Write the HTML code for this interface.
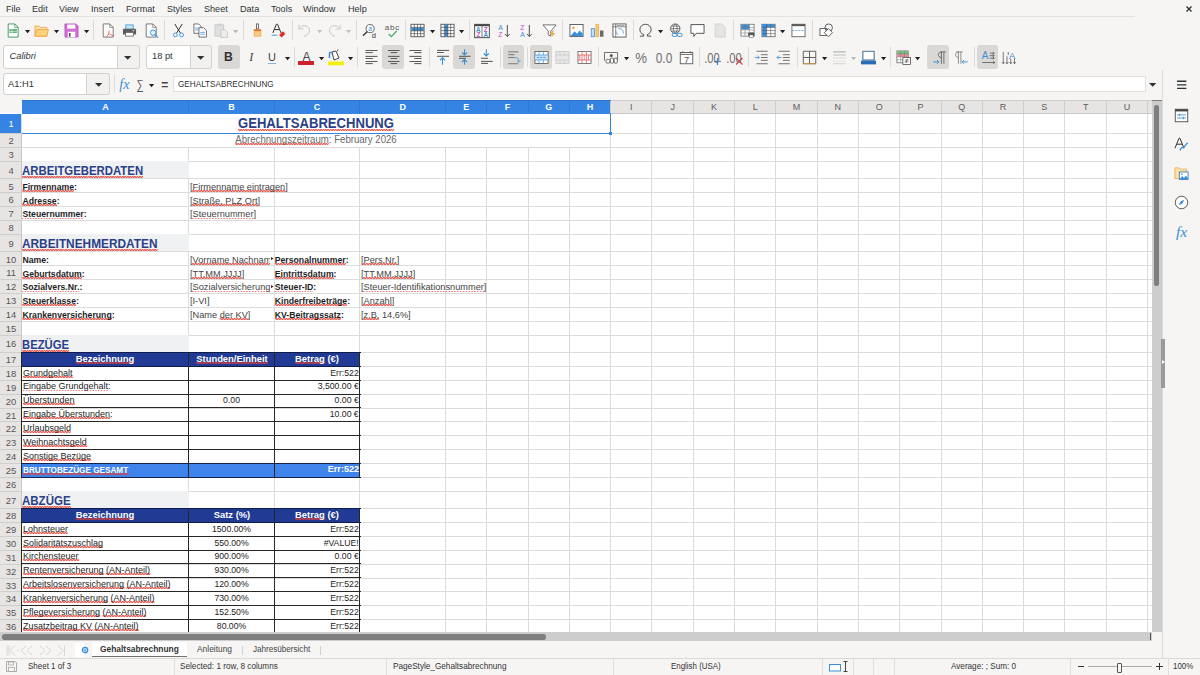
<!DOCTYPE html><html><head><meta charset="utf-8"><style>
html,body{margin:0;padding:0;}
body{width:1200px;height:675px;overflow:hidden;position:relative;background:#f6f5f4;font-family:"Liberation Sans",sans-serif;}
.a{position:absolute;}
.t{position:absolute;white-space:nowrap;line-height:1;}
.w{background:linear-gradient(45deg,transparent 36%,rgba(232,62,52,.62) 36%,rgba(232,62,52,.62) 64%,transparent 64%) 0 calc(100% + 0.4px)/2.7px 2.3px repeat-x,linear-gradient(-45deg,transparent 36%,rgba(232,62,52,.62) 36%,rgba(232,62,52,.62) 64%,transparent 64%) 1.35px calc(100% + 0.4px)/2.7px 2.3px repeat-x;}
svg{position:absolute;overflow:visible;}
</style></head><body>
<div class="a" style="left:0.00px;top:100.10px;width:1152.00px;height:531.90px;background:#ffffff;"></div><div class="a" style="left:0.00px;top:100.10px;width:22.00px;height:13.40px;background:#f6f5f4;"></div><div class="a" style="left:22.00px;top:100.10px;width:1130.00px;height:13.40px;background:#e6e5e3;"></div><div class="a" style="left:22.00px;top:100.10px;width:588.70px;height:13.40px;background:#3584e4;"></div><div class="a" style="left:0.00px;top:113.50px;width:22.00px;height:518.50px;background:#e6e5e3;"></div><div class="a" style="left:0.00px;top:113.50px;width:22.00px;height:20.25px;background:#3584e4;"></div><div class="a" style="left:21.40px;top:113.50px;width:1.00px;height:518.50px;background:#dcdcdc;"></div><div class="a" style="left:188.15px;top:113.50px;width:1.00px;height:518.50px;background:#dcdcdc;"></div><div class="a" style="left:273.73px;top:113.50px;width:1.00px;height:518.50px;background:#dcdcdc;"></div><div class="a" style="left:359.32px;top:113.50px;width:1.00px;height:518.50px;background:#dcdcdc;"></div><div class="a" style="left:444.90px;top:113.50px;width:1.00px;height:518.50px;background:#dcdcdc;"></div><div class="a" style="left:486.20px;top:113.50px;width:1.00px;height:518.50px;background:#dcdcdc;"></div><div class="a" style="left:527.50px;top:113.50px;width:1.00px;height:518.50px;background:#dcdcdc;"></div><div class="a" style="left:568.80px;top:113.50px;width:1.00px;height:518.50px;background:#dcdcdc;"></div><div class="a" style="left:610.10px;top:113.50px;width:1.00px;height:518.50px;background:#dcdcdc;"></div><div class="a" style="left:651.40px;top:113.50px;width:1.00px;height:518.50px;background:#dcdcdc;"></div><div class="a" style="left:692.70px;top:113.50px;width:1.00px;height:518.50px;background:#dcdcdc;"></div><div class="a" style="left:734.00px;top:113.50px;width:1.00px;height:518.50px;background:#dcdcdc;"></div><div class="a" style="left:775.30px;top:113.50px;width:1.00px;height:518.50px;background:#dcdcdc;"></div><div class="a" style="left:816.60px;top:113.50px;width:1.00px;height:518.50px;background:#dcdcdc;"></div><div class="a" style="left:857.90px;top:113.50px;width:1.00px;height:518.50px;background:#dcdcdc;"></div><div class="a" style="left:899.20px;top:113.50px;width:1.00px;height:518.50px;background:#dcdcdc;"></div><div class="a" style="left:940.50px;top:113.50px;width:1.00px;height:518.50px;background:#dcdcdc;"></div><div class="a" style="left:981.80px;top:113.50px;width:1.00px;height:518.50px;background:#dcdcdc;"></div><div class="a" style="left:1023.10px;top:113.50px;width:1.00px;height:518.50px;background:#dcdcdc;"></div><div class="a" style="left:1064.40px;top:113.50px;width:1.00px;height:518.50px;background:#dcdcdc;"></div><div class="a" style="left:1105.70px;top:113.50px;width:1.00px;height:518.50px;background:#dcdcdc;"></div><div class="a" style="left:1147.00px;top:113.50px;width:1.00px;height:518.50px;background:#dcdcdc;"></div><div class="a" style="left:188.15px;top:100.10px;width:1.00px;height:13.40px;background:#2f78d0;"></div><div class="a" style="left:273.73px;top:100.10px;width:1.00px;height:13.40px;background:#2f78d0;"></div><div class="a" style="left:359.32px;top:100.10px;width:1.00px;height:13.40px;background:#2f78d0;"></div><div class="a" style="left:444.90px;top:100.10px;width:1.00px;height:13.40px;background:#2f78d0;"></div><div class="a" style="left:486.20px;top:100.10px;width:1.00px;height:13.40px;background:#2f78d0;"></div><div class="a" style="left:527.50px;top:100.10px;width:1.00px;height:13.40px;background:#2f78d0;"></div><div class="a" style="left:568.80px;top:100.10px;width:1.00px;height:13.40px;background:#2f78d0;"></div><div class="a" style="left:610.10px;top:100.10px;width:1.00px;height:13.40px;background:#cfcecc;"></div><div class="a" style="left:651.40px;top:100.10px;width:1.00px;height:13.40px;background:#cfcecc;"></div><div class="a" style="left:692.70px;top:100.10px;width:1.00px;height:13.40px;background:#cfcecc;"></div><div class="a" style="left:734.00px;top:100.10px;width:1.00px;height:13.40px;background:#cfcecc;"></div><div class="a" style="left:775.30px;top:100.10px;width:1.00px;height:13.40px;background:#cfcecc;"></div><div class="a" style="left:816.60px;top:100.10px;width:1.00px;height:13.40px;background:#cfcecc;"></div><div class="a" style="left:857.90px;top:100.10px;width:1.00px;height:13.40px;background:#cfcecc;"></div><div class="a" style="left:899.20px;top:100.10px;width:1.00px;height:13.40px;background:#cfcecc;"></div><div class="a" style="left:940.50px;top:100.10px;width:1.00px;height:13.40px;background:#cfcecc;"></div><div class="a" style="left:981.80px;top:100.10px;width:1.00px;height:13.40px;background:#cfcecc;"></div><div class="a" style="left:1023.10px;top:100.10px;width:1.00px;height:13.40px;background:#cfcecc;"></div><div class="a" style="left:1064.40px;top:100.10px;width:1.00px;height:13.40px;background:#cfcecc;"></div><div class="a" style="left:1105.70px;top:100.10px;width:1.00px;height:13.40px;background:#cfcecc;"></div><div class="a" style="left:1147.00px;top:100.10px;width:1.00px;height:13.40px;background:#cfcecc;"></div><div class="a" style="left:610.70px;top:113.00px;width:541.30px;height:0.80px;background:#c9c8c6;"></div><div class="a" style="left:22.00px;top:113.00px;width:588.70px;height:0.80px;background:#3a86e0;"></div><div class="a" style="left:610.70px;top:100.10px;width:541.30px;height:0.80px;background:#cfcdcb;"></div><div class="a" style="left:22.00px;top:100.10px;width:588.70px;height:0.80px;background:#2f74c8;"></div><div class="a" style="left:21.40px;top:133.75px;width:0.80px;height:498.25px;background:#c9c8c6;"></div><div class="a" style="left:22.00px;top:133.15px;width:1130.00px;height:1.00px;background:#dcdcdc;"></div><div class="a" style="left:0.00px;top:133.15px;width:22.00px;height:1.00px;background:#cfcecc;"></div><div class="a" style="left:22.00px;top:147.00px;width:1130.00px;height:1.00px;background:#dcdcdc;"></div><div class="a" style="left:0.00px;top:147.00px;width:22.00px;height:1.00px;background:#cfcecc;"></div><div class="a" style="left:22.00px;top:160.85px;width:1130.00px;height:1.00px;background:#dcdcdc;"></div><div class="a" style="left:0.00px;top:160.85px;width:22.00px;height:1.00px;background:#cfcecc;"></div><div class="a" style="left:22.00px;top:178.45px;width:1130.00px;height:1.00px;background:#dcdcdc;"></div><div class="a" style="left:0.00px;top:178.45px;width:22.00px;height:1.00px;background:#cfcecc;"></div><div class="a" style="left:22.00px;top:192.30px;width:1130.00px;height:1.00px;background:#dcdcdc;"></div><div class="a" style="left:0.00px;top:192.30px;width:22.00px;height:1.00px;background:#cfcecc;"></div><div class="a" style="left:22.00px;top:206.15px;width:1130.00px;height:1.00px;background:#dcdcdc;"></div><div class="a" style="left:0.00px;top:206.15px;width:22.00px;height:1.00px;background:#cfcecc;"></div><div class="a" style="left:22.00px;top:220.00px;width:1130.00px;height:1.00px;background:#dcdcdc;"></div><div class="a" style="left:0.00px;top:220.00px;width:22.00px;height:1.00px;background:#cfcecc;"></div><div class="a" style="left:22.00px;top:233.85px;width:1130.00px;height:1.00px;background:#dcdcdc;"></div><div class="a" style="left:0.00px;top:233.85px;width:22.00px;height:1.00px;background:#cfcecc;"></div><div class="a" style="left:22.00px;top:251.45px;width:1130.00px;height:1.00px;background:#dcdcdc;"></div><div class="a" style="left:0.00px;top:251.45px;width:22.00px;height:1.00px;background:#cfcecc;"></div><div class="a" style="left:22.00px;top:265.30px;width:1130.00px;height:1.00px;background:#dcdcdc;"></div><div class="a" style="left:0.00px;top:265.30px;width:22.00px;height:1.00px;background:#cfcecc;"></div><div class="a" style="left:22.00px;top:279.15px;width:1130.00px;height:1.00px;background:#dcdcdc;"></div><div class="a" style="left:0.00px;top:279.15px;width:22.00px;height:1.00px;background:#cfcecc;"></div><div class="a" style="left:22.00px;top:293.00px;width:1130.00px;height:1.00px;background:#dcdcdc;"></div><div class="a" style="left:0.00px;top:293.00px;width:22.00px;height:1.00px;background:#cfcecc;"></div><div class="a" style="left:22.00px;top:306.85px;width:1130.00px;height:1.00px;background:#dcdcdc;"></div><div class="a" style="left:0.00px;top:306.85px;width:22.00px;height:1.00px;background:#cfcecc;"></div><div class="a" style="left:22.00px;top:320.70px;width:1130.00px;height:1.00px;background:#dcdcdc;"></div><div class="a" style="left:0.00px;top:320.70px;width:22.00px;height:1.00px;background:#cfcecc;"></div><div class="a" style="left:22.00px;top:334.55px;width:1130.00px;height:1.00px;background:#dcdcdc;"></div><div class="a" style="left:0.00px;top:334.55px;width:22.00px;height:1.00px;background:#cfcecc;"></div><div class="a" style="left:22.00px;top:352.15px;width:1130.00px;height:1.00px;background:#dcdcdc;"></div><div class="a" style="left:0.00px;top:352.15px;width:22.00px;height:1.00px;background:#cfcecc;"></div><div class="a" style="left:22.00px;top:366.00px;width:1130.00px;height:1.00px;background:#dcdcdc;"></div><div class="a" style="left:0.00px;top:366.00px;width:22.00px;height:1.00px;background:#cfcecc;"></div><div class="a" style="left:22.00px;top:379.85px;width:1130.00px;height:1.00px;background:#dcdcdc;"></div><div class="a" style="left:0.00px;top:379.85px;width:22.00px;height:1.00px;background:#cfcecc;"></div><div class="a" style="left:22.00px;top:393.70px;width:1130.00px;height:1.00px;background:#dcdcdc;"></div><div class="a" style="left:0.00px;top:393.70px;width:22.00px;height:1.00px;background:#cfcecc;"></div><div class="a" style="left:22.00px;top:407.55px;width:1130.00px;height:1.00px;background:#dcdcdc;"></div><div class="a" style="left:0.00px;top:407.55px;width:22.00px;height:1.00px;background:#cfcecc;"></div><div class="a" style="left:22.00px;top:421.40px;width:1130.00px;height:1.00px;background:#dcdcdc;"></div><div class="a" style="left:0.00px;top:421.40px;width:22.00px;height:1.00px;background:#cfcecc;"></div><div class="a" style="left:22.00px;top:435.25px;width:1130.00px;height:1.00px;background:#dcdcdc;"></div><div class="a" style="left:0.00px;top:435.25px;width:22.00px;height:1.00px;background:#cfcecc;"></div><div class="a" style="left:22.00px;top:449.10px;width:1130.00px;height:1.00px;background:#dcdcdc;"></div><div class="a" style="left:0.00px;top:449.10px;width:22.00px;height:1.00px;background:#cfcecc;"></div><div class="a" style="left:22.00px;top:462.95px;width:1130.00px;height:1.00px;background:#dcdcdc;"></div><div class="a" style="left:0.00px;top:462.95px;width:22.00px;height:1.00px;background:#cfcecc;"></div><div class="a" style="left:22.00px;top:476.80px;width:1130.00px;height:1.00px;background:#dcdcdc;"></div><div class="a" style="left:0.00px;top:476.80px;width:22.00px;height:1.00px;background:#cfcecc;"></div><div class="a" style="left:22.00px;top:490.65px;width:1130.00px;height:1.00px;background:#dcdcdc;"></div><div class="a" style="left:0.00px;top:490.65px;width:22.00px;height:1.00px;background:#cfcecc;"></div><div class="a" style="left:22.00px;top:508.25px;width:1130.00px;height:1.00px;background:#dcdcdc;"></div><div class="a" style="left:0.00px;top:508.25px;width:22.00px;height:1.00px;background:#cfcecc;"></div><div class="a" style="left:22.00px;top:522.10px;width:1130.00px;height:1.00px;background:#dcdcdc;"></div><div class="a" style="left:0.00px;top:522.10px;width:22.00px;height:1.00px;background:#cfcecc;"></div><div class="a" style="left:22.00px;top:535.95px;width:1130.00px;height:1.00px;background:#dcdcdc;"></div><div class="a" style="left:0.00px;top:535.95px;width:22.00px;height:1.00px;background:#cfcecc;"></div><div class="a" style="left:22.00px;top:549.80px;width:1130.00px;height:1.00px;background:#dcdcdc;"></div><div class="a" style="left:0.00px;top:549.80px;width:22.00px;height:1.00px;background:#cfcecc;"></div><div class="a" style="left:22.00px;top:563.65px;width:1130.00px;height:1.00px;background:#dcdcdc;"></div><div class="a" style="left:0.00px;top:563.65px;width:22.00px;height:1.00px;background:#cfcecc;"></div><div class="a" style="left:22.00px;top:577.50px;width:1130.00px;height:1.00px;background:#dcdcdc;"></div><div class="a" style="left:0.00px;top:577.50px;width:22.00px;height:1.00px;background:#cfcecc;"></div><div class="a" style="left:22.00px;top:591.35px;width:1130.00px;height:1.00px;background:#dcdcdc;"></div><div class="a" style="left:0.00px;top:591.35px;width:22.00px;height:1.00px;background:#cfcecc;"></div><div class="a" style="left:22.00px;top:605.20px;width:1130.00px;height:1.00px;background:#dcdcdc;"></div><div class="a" style="left:0.00px;top:605.20px;width:22.00px;height:1.00px;background:#cfcecc;"></div><div class="a" style="left:22.00px;top:619.05px;width:1130.00px;height:1.00px;background:#dcdcdc;"></div><div class="a" style="left:0.00px;top:619.05px;width:22.00px;height:1.00px;background:#cfcecc;"></div><div class="a" style="left:22.00px;top:632.90px;width:1130.00px;height:1.00px;background:#dcdcdc;"></div><div class="a" style="left:0.00px;top:632.90px;width:22.00px;height:1.00px;background:#cfcecc;"></div><div class="a" style="left:22.40px;top:113.90px;width:587.70px;height:19.25px;background:#ffffff;"></div><div class="a" style="left:22.40px;top:134.15px;width:587.70px;height:12.85px;background:#ffffff;"></div><div class="a" style="left:22.40px;top:160.85px;width:166.75px;height:17.60px;background:#f0f1f3;"></div><div class="a" style="left:22.40px;top:233.85px;width:166.75px;height:17.60px;background:#f0f1f3;"></div><div class="a" style="left:22.40px;top:334.55px;width:166.75px;height:17.60px;background:#f0f1f3;"></div><div class="a" style="left:22.40px;top:490.65px;width:166.75px;height:17.60px;background:#f0f1f3;"></div><div class="a" style="left:22.00px;top:352.15px;width:338.32px;height:14.85px;background:#213b94;"></div><div class="a" style="left:22.00px;top:462.95px;width:338.32px;height:14.85px;background:#3f84ea;"></div><div class="a" style="left:22.00px;top:352.00px;width:338.72px;height:1.00px;background:#101c4c;"></div><div class="a" style="left:22.00px;top:366.00px;width:338.72px;height:1.00px;background:#101c4c;"></div><div class="a" style="left:22.00px;top:380.00px;width:338.72px;height:1.00px;background:#262626;"></div><div class="a" style="left:22.00px;top:394.00px;width:338.72px;height:1.00px;background:#262626;"></div><div class="a" style="left:22.00px;top:407.00px;width:338.72px;height:1.00px;background:#262626;"></div><div class="a" style="left:22.00px;top:421.00px;width:338.72px;height:1.00px;background:#262626;"></div><div class="a" style="left:22.00px;top:435.00px;width:338.72px;height:1.00px;background:#262626;"></div><div class="a" style="left:22.00px;top:449.00px;width:338.72px;height:1.00px;background:#262626;"></div><div class="a" style="left:22.00px;top:463.00px;width:338.72px;height:1.00px;background:#14224f;"></div><div class="a" style="left:22.00px;top:477.00px;width:338.72px;height:1.00px;background:#14224f;"></div><div class="a" style="left:21.00px;top:352.00px;width:1.00px;height:126.00px;background:#262626;"></div><div class="a" style="left:188.00px;top:352.00px;width:1.00px;height:126.00px;background:#262626;"></div><div class="a" style="left:274.00px;top:352.00px;width:1.00px;height:126.00px;background:#262626;"></div><div class="a" style="left:359.00px;top:352.00px;width:1.00px;height:126.00px;background:#262626;"></div><div class="a" style="left:22.00px;top:508.25px;width:338.32px;height:14.85px;background:#213b94;"></div><div class="a" style="left:22.00px;top:508.00px;width:338.72px;height:1.00px;background:#101c4c;"></div><div class="a" style="left:22.00px;top:522.00px;width:338.72px;height:1.00px;background:#101c4c;"></div><div class="a" style="left:22.00px;top:536.00px;width:338.72px;height:1.00px;background:#262626;"></div><div class="a" style="left:22.00px;top:550.00px;width:338.72px;height:1.00px;background:#262626;"></div><div class="a" style="left:22.00px;top:563.00px;width:338.72px;height:1.00px;background:#262626;"></div><div class="a" style="left:22.00px;top:577.00px;width:338.72px;height:1.00px;background:#262626;"></div><div class="a" style="left:22.00px;top:591.00px;width:338.72px;height:1.00px;background:#262626;"></div><div class="a" style="left:22.00px;top:605.00px;width:338.72px;height:1.00px;background:#262626;"></div><div class="a" style="left:22.00px;top:619.00px;width:338.72px;height:1.00px;background:#262626;"></div><div class="a" style="left:22.00px;top:633.00px;width:338.72px;height:1.00px;background:#262626;"></div><div class="a" style="left:21.00px;top:508.00px;width:1.00px;height:126.00px;background:#262626;"></div><div class="a" style="left:188.00px;top:508.00px;width:1.00px;height:126.00px;background:#262626;"></div><div class="a" style="left:274.00px;top:508.00px;width:1.00px;height:126.00px;background:#262626;"></div><div class="a" style="left:359.00px;top:508.00px;width:1.00px;height:126.00px;background:#262626;"></div><div class="a" style="left:22.00px;top:132.55px;width:589.20px;height:1.90px;background:#3584e4;"></div><div class="a" style="left:609.70px;top:113.50px;width:1.60px;height:20.85px;background:#3584e4;"></div><div class="a" style="left:608.50px;top:131.95px;width:3.60px;height:3.20px;background:#3584e4;"></div><div class="a" style="left:0.00px;top:16.20px;width:1135.00px;height:0.80px;background:#e4e2df;"></div><svg style="left:1185.50px;top:5.50px;" width="6" height="6" viewBox="0 0 6 6"><path d="M0.5 0.5 L5.5 5.5 M5.5 0.5 L0.5 5.5" stroke="#2e3436" stroke-width="1.4"/></svg><svg style="left:5.50px;top:22.50px;" width="15" height="15" viewBox="0 0 24 24"><path d="M3.5 1.5 H14 L19.5 7 V22.5 H3.5Z" fill="#fff" stroke="#3f9a5e" stroke-width="1.5"/><path d="M14 1.5 V7 H19.5" fill="none" stroke="#3f9a5e" stroke-width="1.2"/><rect x="5.5" y="10" width="12" height="2.5" fill="#3f9a5e"/><rect x="5.5" y="13.5" width="12" height="2.5" fill="#62b77e"/><rect x="9" y="10" width="1" height="6" fill="#fff"/></svg><svg style="left:25.20px;top:29.80px;" width="5.2" height="3.2" viewBox="0 0 5.2 3.2"><path d="M0 0 H5.2 L2.6 3.2Z" fill="#1f1f1f"/></svg><svg style="left:34.20px;top:22.50px;" width="15" height="15" viewBox="0 0 24 24"><path d="M1.5 5 H8 L10 7 H20.5 V21 H1.5Z" fill="#fbe3a8" stroke="#f0a34a" stroke-width="1.4"/><path d="M1.5 21 L4.5 10.5 H23 L20.5 21Z" fill="#f9d27a" stroke="#f0a34a" stroke-width="1.4"/></svg><svg style="left:54.40px;top:29.80px;" width="5.2" height="3.2" viewBox="0 0 5.2 3.2"><path d="M0 0 H5.2 L2.6 3.2Z" fill="#1f1f1f"/></svg><svg style="left:63.80px;top:22.50px;" width="15" height="15" viewBox="0 0 24 24"><path d="M1.5 1.5 H19 L22.5 5 V22.5 H1.5Z" fill="#cf6fd6" stroke="#b050bb" stroke-width="1.2"/><rect x="5" y="2.5" width="13" height="6.5" fill="#fff"/><rect x="6" y="14" width="12" height="8.5" fill="#fff"/><rect x="8" y="16" width="2.5" height="6" fill="#7a3c82"/></svg><svg style="left:83.60px;top:29.80px;" width="5.2" height="3.2" viewBox="0 0 5.2 3.2"><path d="M0 0 H5.2 L2.6 3.2Z" fill="#1f1f1f"/></svg><div class="a" style="left:92.80px;top:20.00px;width:1.00px;height:20.00px;background:#dcdad7;"></div><svg style="left:100.50px;top:22.50px;" width="15" height="15" viewBox="0 0 24 24"><path d="M3.5 1.5 H14 L19.5 7 V22.5 H3.5Z" fill="#fff" stroke="#6a6a6a" stroke-width="1.4"/><path d="M14 1.5 V7 H19.5" fill="none" stroke="#6a6a6a" stroke-width="1.1"/><path d="M13 12 C13 18 10 21 8 23 M13 17 C15 19 18 20 21 20" fill="none" stroke="#e84a43" stroke-width="1.3"/></svg><svg style="left:121.60px;top:22.50px;" width="15" height="15" viewBox="0 0 24 24"><rect x="6" y="3" width="12" height="7" fill="#bfe3f8" stroke="#4a9ccc" stroke-width="1.3"/><rect x="1.5" y="9" width="21" height="9.5" rx="1.5" fill="#5d5d5d"/><rect x="5.5" y="15" width="13" height="6" fill="#fff" stroke="#5d5d5d" stroke-width="1.2"/><rect x="17" y="11.5" width="2.5" height="1.5" fill="#fff"/></svg><svg style="left:144.20px;top:22.50px;" width="15" height="15" viewBox="0 0 24 24"><path d="M3.5 1.5 H14 L19.5 7 V22.5 H3.5Z" fill="#fff" stroke="#6a6a6a" stroke-width="1.4"/><path d="M14 1.5 V7 H19.5" fill="none" stroke="#6a6a6a" stroke-width="1.1"/><circle cx="14.5" cy="15.5" r="4.3" fill="#e6f3fb" stroke="#3a8fd8" stroke-width="1.5"/><path d="M17.5 18.5 L22.5 23.5" stroke="#3a8fd8" stroke-width="1.8"/></svg><div class="a" style="left:163.80px;top:20.00px;width:1.00px;height:20.00px;background:#dcdad7;"></div><svg style="left:170.50px;top:22.50px;" width="15" height="15" viewBox="0 0 24 24"><path d="M6 1.5 L15 16 M18 1.5 L9 16" stroke="#333" stroke-width="1.6"/><circle cx="7" cy="19" r="3" fill="#fff" stroke="#3a8fd8" stroke-width="1.5"/><circle cx="17" cy="19" r="3" fill="#fff" stroke="#3a8fd8" stroke-width="1.5"/></svg><svg style="left:192.50px;top:22.50px;" width="15" height="15" viewBox="0 0 24 24"><path d="M1.5 1.5 H9 L12.5 5 V16.5 H1.5Z" fill="#fff" stroke="#555" stroke-width="1.3"/><path d="M9.5 7.5 H17 L21.5 12 V22.5 H9.5Z" fill="#fff" stroke="#555" stroke-width="1.3"/><path d="M3.5 8 H9 M3.5 11 H9 M11.5 15 H19 M11.5 18 H19" stroke="#3a8fd8" stroke-width="1.2"/></svg><svg style="left:214.30px;top:22.50px;" width="15" height="15" viewBox="0 0 24 24"><rect x="1.5" y="3" width="14" height="18" fill="#e0e0e0" stroke="#c4c4c4" stroke-width="1.3"/><rect x="5" y="1" width="7" height="4" fill="#d0d0d0"/><path d="M11 11 H18 L21.5 14.5 V23 H11Z" fill="#ececec" stroke="#c4c4c4" stroke-width="1.3"/></svg><svg style="left:233.10px;top:29.80px;" width="5.2" height="3.2" viewBox="0 0 5.2 3.2"><path d="M0 0 H5.2 L2.6 3.2Z" fill="#b8b8b8"/></svg><div class="a" style="left:242.50px;top:20.00px;width:1.00px;height:20.00px;background:#dcdad7;"></div><svg style="left:250.30px;top:22.50px;" width="15" height="15" viewBox="0 0 24 24"><rect x="10.5" y="1.5" width="3" height="8" fill="#fff" stroke="#555" stroke-width="1.3"/><path d="M6 10 H18 V13 H6Z" fill="#e07030"/><path d="M6 13 H18 V22 H6Z" fill="#f5b860"/><path d="M8 16 H16 M8 19 H16" stroke="#fff" stroke-width="0.8"/></svg><svg style="left:271.40px;top:22.50px;" width="15" height="15" viewBox="0 0 24 24"><path d="M3 16 L8.5 2 H10.5 L16 16 M5.5 10.5 H13.5" fill="none" stroke="#333" stroke-width="1.6"/><path d="M1 19.5 H10" stroke="#3a8fd8" stroke-width="1.5"/><path d="M13 19 L19 13 L23 17 L17 23Z" fill="#e02b2b"/></svg><div class="a" style="left:291.80px;top:20.00px;width:1.00px;height:20.00px;background:#dcdad7;"></div><svg style="left:297.20px;top:22.50px;" width="15" height="15" viewBox="0 0 24 24"><path d="M5 7 C10 2 20 4 20 12 C20 17 15 21 11 21" fill="none" stroke="#c8c8c8" stroke-width="1.6"/><path d="M3 2.5 V9.5 H10" fill="none" stroke="#c8c8c8" stroke-width="1.6"/></svg><svg style="left:316.80px;top:29.80px;" width="5.2" height="3.2" viewBox="0 0 5.2 3.2"><path d="M0 0 H5.2 L2.6 3.2Z" fill="#c0c0c0"/></svg><svg style="left:326.80px;top:22.50px;" width="15" height="15" viewBox="0 0 24 24"><path d="M19 7 C14 2 4 4 4 12 C4 17 9 21 13 21" fill="none" stroke="#c8c8c8" stroke-width="1.6"/><path d="M21 2.5 V9.5 H14" fill="none" stroke="#c8c8c8" stroke-width="1.6"/></svg><svg style="left:346.10px;top:29.80px;" width="5.2" height="3.2" viewBox="0 0 5.2 3.2"><path d="M0 0 H5.2 L2.6 3.2Z" fill="#c0c0c0"/></svg><div class="a" style="left:356.10px;top:20.00px;width:1.00px;height:20.00px;background:#dcdad7;"></div><svg style="left:362.30px;top:22.50px;" width="15" height="15" viewBox="0 0 24 24"><circle cx="13" cy="9" r="6.5" fill="#fff" stroke="#555" stroke-width="1.4"/><text x="13" y="12.5" font-size="11" text-anchor="middle" fill="#3a8fd8" font-family="Liberation Sans">a</text><path d="M8.5 13.5 L1.5 20.5" stroke="#333" stroke-width="2"/><text x="19" y="23.5" font-size="12" text-anchor="middle" fill="#333" font-family="Liberation Sans">d</text></svg><svg style="left:383.50px;top:22.50px;" width="16" height="16" viewBox="0 0 24 24"><text x="12" y="10.5" font-size="12" text-anchor="middle" fill="#555" font-family="Liberation Sans" textLength="22">abc</text><path d="M7 16.5 L11 20.5 L19 12" fill="none" stroke="#3fae6a" stroke-width="1.8"/></svg><div class="a" style="left:404.90px;top:20.00px;width:1.00px;height:20.00px;background:#dcdad7;"></div><svg style="left:410.20px;top:22.50px;" width="15" height="15" viewBox="0 0 24 24"><rect x="1.5" y="2" width="21" height="20" fill="#fff" stroke="#444" stroke-width="1.3"/><rect x="2" y="7.5" width="20" height="5" fill="#3a8fd8"/><path d="M1.5 7 H22.5 M1.5 12.5 H22.5 M1.5 17 H22.5 M7 2 V22 M12 2 V22 M17 2 V22" stroke="#444" stroke-width="1"/></svg><svg style="left:429.70px;top:29.80px;" width="5.2" height="3.2" viewBox="0 0 5.2 3.2"><path d="M0 0 H5.2 L2.6 3.2Z" fill="#1f1f1f"/></svg><svg style="left:439.50px;top:22.50px;" width="15" height="15" viewBox="0 0 24 24"><rect x="1.5" y="2" width="21" height="20" fill="#fff" stroke="#444" stroke-width="1.3"/><rect x="7.5" y="2" width="5" height="20" fill="#3a8fd8"/><path d="M1.5 7 H22.5 M1.5 12 H22.5 M1.5 17 H22.5 M7 2 V22 M12.5 2 V22 M17 2 V22" stroke="#444" stroke-width="1"/></svg><svg style="left:459.10px;top:29.80px;" width="5.2" height="3.2" viewBox="0 0 5.2 3.2"><path d="M0 0 H5.2 L2.6 3.2Z" fill="#1f1f1f"/></svg><div class="a" style="left:468.50px;top:20.00px;width:1.00px;height:20.00px;background:#dcdad7;"></div><svg style="left:474.20px;top:22.50px;" width="16" height="16" viewBox="0 0 24 24"><rect x="1" y="2" width="22" height="20" fill="#fff" stroke="#444" stroke-width="1.4"/><rect x="1" y="2" width="22" height="2.8" fill="#444"/><path d="M12 4 V22" stroke="#444" stroke-width="1.1"/><g font-family="Liberation Sans" font-size="9.5" text-anchor="middle" font-weight="bold"><text x="6.5" y="12.8" fill="#3a8fd8">A</text><text x="6.5" y="21" fill="#c050c0">Z</text><text x="17.5" y="12.8" fill="#c050c0">Z</text><text x="17.5" y="21" fill="#3a8fd8">A</text></g></svg><svg style="left:497.20px;top:22.50px;" width="15" height="15" viewBox="0 0 24 24"><g font-family="Liberation Sans" font-size="11" text-anchor="middle"><text x="5.5" y="10.5" fill="#3a8fd8">A</text><text x="5.5" y="22" fill="#c050c0">Z</text></g><path d="M16.5 3 V21.5 M12.5 17.5 L16.5 21.5 L20.5 17.5" fill="none" stroke="#444" stroke-width="1.5"/></svg><svg style="left:519.30px;top:22.50px;" width="15" height="15" viewBox="0 0 24 24"><g font-family="Liberation Sans" font-size="11" text-anchor="middle"><text x="5.5" y="10.5" fill="#c050c0">Z</text><text x="5.5" y="22" fill="#3a8fd8">A</text></g><path d="M16.5 3 V21.5 M12.5 17.5 L16.5 21.5 L20.5 17.5" fill="none" stroke="#444" stroke-width="1.5"/></svg><svg style="left:541.50px;top:22.50px;" width="15" height="15" viewBox="0 0 24 24"><path d="M1.5 3 H22.5 L14 13 V21 L10 19 V13Z" fill="#fff" stroke="#555" stroke-width="1.3"/><path d="M17 12 L13 18 H17 L15 23 L21 16 H17 L19 12Z" fill="#f0a030"/></svg><div class="a" style="left:561.80px;top:20.00px;width:1.00px;height:20.00px;background:#dcdad7;"></div><svg style="left:568.50px;top:22.50px;" width="15" height="15" viewBox="0 0 24 24"><rect x="1.5" y="2.5" width="21" height="19" fill="#fff" stroke="#444" stroke-width="1.3"/><circle cx="7" cy="8" r="2" fill="#f0a030"/><path d="M2 21 L9 13 L13 17 L17 12 L22 17 V21Z" fill="#3a8fd8"/></svg><svg style="left:590.40px;top:22.50px;" width="15" height="15" viewBox="0 0 24 24"><rect x="2" y="9" width="5" height="13" fill="#bfe0f8" stroke="#3a8fd8" stroke-width="1.2"/><rect x="9.5" y="2" width="4" height="20" fill="#f7c870" stroke="#f0a030" stroke-width="1"/><rect x="16" y="12" width="5.5" height="10" fill="#6a6a6a"/></svg><svg style="left:612.40px;top:22.50px;" width="15" height="15" viewBox="0 0 24 24"><rect x="1.5" y="1.5" width="21" height="21" fill="#fff" stroke="#444" stroke-width="1.3"/><path d="M1.5 6 H22.5 M6 1.5 V22.5" stroke="#444" stroke-width="1"/><path d="M10 9 C16 9 18 11 18 17 M10 18 C8 18 6 16 6 13" fill="none" stroke="#3a8fd8" stroke-width="1.3"/><rect x="8" y="3" width="12" height="2" fill="#aaa"/></svg><div class="a" style="left:633.20px;top:20.00px;width:1.00px;height:20.00px;background:#dcdad7;"></div><svg style="left:638.20px;top:22.50px;" width="15" height="15" viewBox="0 0 24 24"><path d="M3 21 H9 V18.5 C5 17 3 14 3 10.5 C3 5.5 7 2 12 2 C17 2 21 5.5 21 10.5 C21 14 19 17 15 18.5 V21 H21" fill="none" stroke="#444" stroke-width="1.5"/></svg><svg style="left:657.70px;top:29.80px;" width="5.2" height="3.2" viewBox="0 0 5.2 3.2"><path d="M0 0 H5.2 L2.6 3.2Z" fill="#1f1f1f"/></svg><svg style="left:668.70px;top:22.50px;" width="15" height="15" viewBox="0 0 24 24"><circle cx="10" cy="9" r="7.5" fill="#fff" stroke="#444" stroke-width="1.3"/><path d="M2.5 9 H17.5 M10 1.5 C6 5 6 13 10 16.5 C14 13 14 5 10 1.5 M4 5 H16 M4 13 H16" fill="none" stroke="#444" stroke-width="1"/><rect x="5" y="16.5" width="8" height="5" rx="2.5" fill="none" stroke="#3a8fd8" stroke-width="1.6"/><rect x="13" y="16.5" width="8" height="5" rx="2.5" fill="none" stroke="#3a8fd8" stroke-width="1.6"/></svg><svg style="left:690.30px;top:22.50px;" width="15" height="15" viewBox="0 0 24 24"><path d="M1.5 2.5 H22.5 V16.5 H10 L6 21.5 V16.5 H1.5Z" fill="#fff" stroke="#444" stroke-width="1.4"/></svg><svg style="left:713.00px;top:22.50px;" width="15" height="15" viewBox="0 0 24 24"><path d="M3.5 1.5 H14 L19.5 7 V22.5 H3.5Z" fill="#e4e4e4" stroke="#d0d0d0" stroke-width="1.3"/></svg><div class="a" style="left:733.20px;top:20.00px;width:1.00px;height:20.00px;background:#dcdad7;"></div><svg style="left:739.60px;top:22.50px;" width="15" height="15" viewBox="0 0 24 24"><rect x="1.5" y="2" width="21" height="19" fill="#fff" stroke="#666" stroke-width="1.2"/><rect x="2" y="2.5" width="13" height="8" fill="#3a8fd8"/><path d="M1.5 7 H22.5 M1.5 11 H22.5 M1.5 16 H22.5 M8 2 V21 M15 2 V21" stroke="#777" stroke-width="0.9"/><rect x="13" y="15" width="10" height="6" rx="1.5" fill="#555"/><rect x="15" y="19" width="6" height="4" fill="#fff" stroke="#555" stroke-width="0.8"/></svg><svg style="left:760.50px;top:22.50px;" width="15" height="15" viewBox="0 0 24 24"><rect x="1.5" y="2" width="21" height="20" fill="#fff" stroke="#555" stroke-width="1.2"/><rect x="2" y="2" width="7" height="20" fill="#3a8fd8"/><rect x="2" y="2" width="20.5" height="5" fill="#3a8fd8"/><path d="M1.5 7 H22.5 M1.5 12 H22.5 M1.5 17 H22.5 M9 2 V22 M15.5 2 V22" stroke="#555" stroke-width="0.9"/></svg><svg style="left:780.40px;top:29.80px;" width="5.2" height="3.2" viewBox="0 0 5.2 3.2"><path d="M0 0 H5.2 L2.6 3.2Z" fill="#1f1f1f"/></svg><svg style="left:791.20px;top:22.50px;" width="15" height="15" viewBox="0 0 24 24"><rect x="1.5" y="2" width="21" height="20" fill="#fff" stroke="#555" stroke-width="1.3"/><rect x="1.5" y="2" width="21" height="3" fill="#555"/><path d="M2 12 H22" stroke="#3a8fd8" stroke-width="1.2" stroke-dasharray="3 2"/></svg><div class="a" style="left:811.80px;top:20.00px;width:1.00px;height:20.00px;background:#dcdad7;"></div><svg style="left:818.60px;top:22.50px;" width="15" height="15" viewBox="0 0 24 24"><rect x="1.5" y="9" width="11" height="11" fill="#fff" stroke="#444" stroke-width="1.3"/><circle cx="15.5" cy="7.5" r="6" fill="none" stroke="#444" stroke-width="1.3"/><path d="M15 9 L21.5 15.5 L15 22 L8.5 15.5Z" fill="#fff" stroke="#444" stroke-width="1.3"/></svg><div class="a" style="left:3.00px;top:45.20px;width:134.50px;height:21.60px;background:#ffffff;border:1px solid #d3d1ce;border-radius:3px;"></div><div class="a" style="left:116.5px;top:45.2px;width:21px;height:21.6px;background:#f2f1ef;border:1px solid #d3d1ce;border-radius:0 3px 3px 0;"></div><svg style="left:124.30px;top:55.50px;" width="7.4" height="3.8" viewBox="0 0 7.4 3.8"><path d="M0 0 H7.4 L3.7 3.8Z" fill="#2e3436"/></svg><div class="a" style="left:145.80px;top:45.20px;width:64.50px;height:21.60px;background:#ffffff;border:1px solid #d3d1ce;border-radius:3px;"></div><div class="a" style="left:189.5px;top:45.2px;width:20.8px;height:21.6px;background:#f2f1ef;border:1px solid #d3d1ce;border-radius:0 3px 3px 0;"></div><svg style="left:196.80px;top:55.50px;" width="7.4" height="3.8" viewBox="0 0 7.4 3.8"><path d="M0 0 H7.4 L3.7 3.8Z" fill="#2e3436"/></svg><div class="a" style="left:218.40px;top:45.30px;width:21.30px;height:24.00px;background:#dad8d4;border-radius:3px;"></div><div class="a" style="left:268.00px;top:63.20px;width:8.30px;height:1.20px;background:#7fb5e3;"></div><svg style="left:284.70px;top:56.70px;" width="5.2" height="3.2" viewBox="0 0 5.2 3.2"><path d="M0 0 H5.2 L2.6 3.2Z" fill="#1f1f1f"/></svg><div class="a" style="left:294.20px;top:47.00px;width:1.00px;height:20.00px;background:#dcdad7;"></div><div class="a" style="left:298.40px;top:61.40px;width:16.00px;height:3.60px;background:#d0202a;"></div><svg style="left:318.70px;top:56.70px;" width="5.2" height="3.2" viewBox="0 0 5.2 3.2"><path d="M0 0 H5.2 L2.6 3.2Z" fill="#1f1f1f"/></svg><svg style="left:328.00px;top:48.50px;" width="16" height="17" viewBox="0 0 16 17"><path d="M4 3 L8 2 L11 9 L6 11Z" fill="#fff" stroke="#444" stroke-width="1"/><path d="M9 1.5 L10.5 1" stroke="#444" stroke-width="1"/><path d="M1.5 3.5 V9 M1.5 3.5 H4" stroke="#3a8fd8" stroke-width="1.5" fill="none"/><rect x="0" y="12.5" width="16" height="3.8" fill="#f5ee10"/></svg><svg style="left:348.10px;top:56.70px;" width="5.2" height="3.2" viewBox="0 0 5.2 3.2"><path d="M0 0 H5.2 L2.6 3.2Z" fill="#1f1f1f"/></svg><div class="a" style="left:357.20px;top:47.00px;width:1.00px;height:20.00px;background:#dcdad7;"></div><svg style="left:0.00px;top:0.00px;" width="1200" height="100" viewBox="0 0 1200 100"><path d="M365.5 50.5 H377.5" stroke="#5a5a5a" stroke-width="1.05"/><path d="M365.5 52.6 H372.8" stroke="#5a5a5a" stroke-width="1.05"/><path d="M365.5 56.4 H377.5" stroke="#5a5a5a" stroke-width="1.05"/><path d="M365.5 58.5 H372.8" stroke="#5a5a5a" stroke-width="1.05"/><path d="M365.5 61.5 H377.5" stroke="#5a5a5a" stroke-width="1.05"/><path d="M365.5 63.6 H372.8" stroke="#5a5a5a" stroke-width="1.05"/></svg><div class="a" style="left:382.30px;top:45.30px;width:21.70px;height:24.00px;background:#dad8d4;border-radius:3px;"></div><svg style="left:0.00px;top:0.00px;" width="1200" height="100" viewBox="0 0 1200 100"><path d="M388 50.5 H399.6" stroke="#5a5a5a" stroke-width="1.05"/><path d="M390.6 52.6 H397.2" stroke="#5a5a5a" stroke-width="1.05"/><path d="M388 56.4 H399.6" stroke="#5a5a5a" stroke-width="1.05"/><path d="M390.6 58.5 H397.2" stroke="#5a5a5a" stroke-width="1.05"/><path d="M388 61.5 H399.6" stroke="#5a5a5a" stroke-width="1.05"/><path d="M390.6 63.6 H397.2" stroke="#5a5a5a" stroke-width="1.05"/></svg><svg style="left:0.00px;top:0.00px;" width="1200" height="100" viewBox="0 0 1200 100"><path d="M409.4 50.5 H421.5" stroke="#5a5a5a" stroke-width="1.05"/><path d="M414.2 52.6 H421.5" stroke="#5a5a5a" stroke-width="1.05"/><path d="M409.4 56.4 H421.5" stroke="#5a5a5a" stroke-width="1.05"/><path d="M414.2 58.5 H421.5" stroke="#5a5a5a" stroke-width="1.05"/><path d="M409.4 61.5 H421.5" stroke="#5a5a5a" stroke-width="1.05"/><path d="M414.2 63.6 H421.5" stroke="#5a5a5a" stroke-width="1.05"/></svg><div class="a" style="left:428.50px;top:47.00px;width:1.00px;height:20.00px;background:#dcdad7;"></div><svg style="left:0.00px;top:0.00px;" width="1200" height="100" viewBox="0 0 1200 100"><path d="M437 50.4 H449" stroke="#5a5a5a" stroke-width="1.05"/><path d="M437 52.5 H443.8" stroke="#5a5a5a" stroke-width="1.05"/><path d="M437 56.3 H449" stroke="#5a5a5a" stroke-width="1.05"/><path d="M442.5 64.8 V57.8 M440 60.3 L442.5 57.6 L445 60.3" stroke="#3a8fd8" stroke-width="1.1" fill="none"/></svg><div class="a" style="left:453.40px;top:45.30px;width:21.60px;height:24.00px;background:#dad8d4;border-radius:3px;"></div><svg style="left:0.00px;top:0.00px;" width="1200" height="100" viewBox="0 0 1200 100"><path d="M459 56.3 H470.5" stroke="#5a5a5a" stroke-width="1.05"/><path d="M459 58.3 H466" stroke="#5a5a5a" stroke-width="1.05"/><path d="M464.5 49.3 V55 M462 52.5 L464.5 55 L467 52.5 M464.5 64.8 V59.5 M462 62 L464.5 59.5 L467 62" stroke="#3a8fd8" stroke-width="1.1" fill="none"/></svg><svg style="left:0.00px;top:0.00px;" width="1200" height="100" viewBox="0 0 1200 100"><path d="M481 58.3 H488" stroke="#5a5a5a" stroke-width="1.05"/><path d="M481 61.4 H492.7" stroke="#5a5a5a" stroke-width="1.05"/><path d="M481 63.4 H488" stroke="#5a5a5a" stroke-width="1.05"/><path d="M486.3 49.3 V56 M483.8 53.5 L486.3 56 L488.8 53.5" stroke="#3a8fd8" stroke-width="1.1" fill="none"/></svg><div class="a" style="left:500.10px;top:47.00px;width:1.00px;height:20.00px;background:#dcdad7;"></div><div class="a" style="left:503.00px;top:45.30px;width:21.30px;height:24.00px;background:#dad8d4;border-radius:3px;"></div><svg style="left:506.50px;top:49.50px;" width="15" height="15" viewBox="0 0 24 24"><path d="M2 3 H18 M2 7.5 H12 M2 12 H12 M2 22 H18" stroke="#555" stroke-width="1.2"/><path d="M12 12 C17 12 19 14 19 18 M16 17 L19 19.5 L22 17" stroke="#3a8fd8" stroke-width="1.3" fill="none"/></svg><div class="a" style="left:527.20px;top:47.00px;width:1.00px;height:20.00px;background:#dcdad7;"></div><div class="a" style="left:530.30px;top:45.30px;width:21.40px;height:24.00px;background:#dad8d4;border-radius:3px;"></div><svg style="left:533.50px;top:49.50px;" width="15" height="15" viewBox="0 0 24 24"><rect x="1.5" y="2.5" width="21" height="19" fill="#fff" stroke="#444" stroke-width="1.2"/><rect x="2" y="8" width="20" height="8" fill="#bfe0f8"/><path d="M1.5 8 H22.5 M1.5 16 H22.5 M8 2.5 V8 M15 2.5 V8 M8 16 V21.5 M15 16 V21.5" stroke="#3a8fd8" stroke-width="1.1"/><path d="M5 12 H19" stroke="#3a8fd8" stroke-width="1.3" stroke-dasharray="3 2"/></svg><svg style="left:555.30px;top:49.50px;" width="15" height="15" viewBox="0 0 24 24"><rect x="1.5" y="2.5" width="21" height="19" fill="#e8e8e8" stroke="#c6c6c6" stroke-width="1.2"/><path d="M1.5 8 H22.5 M1.5 16 H22.5 M8 2.5 V8 M15 2.5 V8 M8 16 V21.5 M15 16 V21.5" stroke="#c6c6c6" stroke-width="1.1"/></svg><svg style="left:577.30px;top:49.50px;" width="15" height="15" viewBox="0 0 24 24"><rect x="1.5" y="2.5" width="21" height="19" fill="#fff" stroke="#555" stroke-width="1.2"/><path d="M1.5 8 H22.5 M1.5 16 H22.5 M8 2.5 V21.5 M15 2.5 V21.5 M4.5 8 V16 M11.5 8 V16 M18.5 8 V16" stroke="#e04848" stroke-width="1.1"/></svg><div class="a" style="left:597.80px;top:47.00px;width:1.00px;height:20.00px;background:#dcdad7;"></div><svg style="left:602.50px;top:49.50px;" width="16" height="15" viewBox="0 0 24 24"><path d="M1.5 4 H22.5 V17 M1.5 4 V17" fill="none" stroke="#555" stroke-width="1.3" stroke-dasharray="20 0"/><circle cx="12.5" cy="9" r="2.2" fill="#444"/><rect x="4" y="15" width="6" height="6" rx="2" fill="#fff" stroke="#444" stroke-width="1.2"/><rect x="11" y="13" width="5" height="8" rx="1.5" fill="#fff" stroke="#444" stroke-width="1.2"/><rect x="17" y="13" width="5" height="8" rx="1.5" fill="#fff" stroke="#444" stroke-width="1.2"/></svg><svg style="left:623.70px;top:56.70px;" width="5.2" height="3.2" viewBox="0 0 5.2 3.2"><path d="M0 0 H5.2 L2.6 3.2Z" fill="#1f1f1f"/></svg><svg style="left:678.50px;top:49.50px;" width="15" height="15" viewBox="0 0 24 24"><rect x="2" y="4" width="20" height="18" fill="#fff" stroke="#555" stroke-width="1.4"/><path d="M2 7 H22 M6 2 V5 M18 2 V5" stroke="#555" stroke-width="1.4"/><text x="12" y="20.5" font-size="15" text-anchor="middle" fill="#555" font-family="Liberation Sans">7</text></svg><div class="a" style="left:698.80px;top:47.00px;width:1.00px;height:20.00px;background:#dcdad7;"></div><svg style="left:714.00px;top:58.00px;" width="7" height="7" viewBox="0 0 7 7"><path d="M3.5 0 V7 M0 3.5 H7" stroke="#3a8fd8" stroke-width="1.2"/></svg><svg style="left:736.00px;top:58.00px;" width="6.5" height="6.5" viewBox="0 0 6.5 6.5"><path d="M0 0 L6.5 6.5 M6.5 0 L0 6.5" stroke="#e03a3a" stroke-width="1.1"/></svg><div class="a" style="left:748.20px;top:47.00px;width:1.00px;height:20.00px;background:#dcdad7;"></div><svg style="left:754.20px;top:49.50px;" width="15" height="15" viewBox="0 0 24 24"><path d="M4 2 H22 M11 7.5 H22 M11 12 H22 M11 16.5 H22 M4 22 H22" stroke="#555" stroke-width="1.3"/><path d="M1 12 H8 M5.5 9 L8.5 12 L5.5 15" stroke="#3a8fd8" stroke-width="1.3" fill="none"/></svg><svg style="left:775.60px;top:49.50px;" width="15" height="15" viewBox="0 0 24 24"><path d="M4 2 H22 M11 7.5 H22 M11 12 H22 M11 16.5 H22 M4 22 H22" stroke="#555" stroke-width="1.3"/><path d="M9 12 H1.5 M4.5 9 L1.5 12 L4.5 15" stroke="#3a8fd8" stroke-width="1.3" fill="none"/></svg><div class="a" style="left:796.80px;top:47.00px;width:1.00px;height:20.00px;background:#dcdad7;"></div><svg style="left:802.20px;top:49.50px;" width="15" height="15" viewBox="0 0 24 24"><path d="M2 2 H22 V22 H2Z M12 2 V22 M2 12 H22" fill="none" stroke="#444" stroke-width="1.3"/><path d="M2 22 H22" stroke="#f0a030" stroke-width="1.2"/></svg><svg style="left:822.40px;top:56.70px;" width="5.2" height="3.2" viewBox="0 0 5.2 3.2"><path d="M0 0 H5.2 L2.6 3.2Z" fill="#1f1f1f"/></svg><svg style="left:832.20px;top:49.50px;" width="15" height="15" viewBox="0 0 24 24"><path d="M2 3 H22" stroke="#bbb" stroke-width="2.2"/><path d="M2 8 H22" stroke="#bbb" stroke-width="1.6"/><path d="M2 13 H22" stroke="#bbb" stroke-width="1.2" stroke-dasharray="3 1.5"/><path d="M2 18 H22" stroke="#bbb" stroke-width="1" stroke-dasharray="1.5 1.5"/><path d="M2 22 H22" stroke="#bbb" stroke-width="1"/></svg><svg style="left:851.40px;top:56.70px;" width="5.2" height="3.2" viewBox="0 0 5.2 3.2"><path d="M0 0 H5.2 L2.6 3.2Z" fill="#b8b8b8"/></svg><svg style="left:859.50px;top:49.50px;" width="17" height="15" viewBox="0 0 24 24"><rect x="3" y="2" width="18" height="14" fill="#fff" stroke="#555" stroke-width="1.3"/><rect x="3" y="2" width="18" height="14" fill="none" stroke="#3a8fd8" stroke-width="0.8"/><rect x="0" y="17" width="24" height="6" fill="#2a6db5"/></svg><svg style="left:880.70px;top:56.70px;" width="5.2" height="3.2" viewBox="0 0 5.2 3.2"><path d="M0 0 H5.2 L2.6 3.2Z" fill="#1f1f1f"/></svg><div class="a" style="left:890.20px;top:47.00px;width:1.00px;height:20.00px;background:#dcdad7;"></div><svg style="left:895.50px;top:49.50px;" width="15" height="15" viewBox="0 0 24 24"><rect x="1.5" y="1.5" width="18" height="19" fill="#fff" stroke="#555" stroke-width="1.1"/><rect x="2" y="2" width="17.5" height="4.5" fill="#6cc07a"/><rect x="2" y="6.5" width="17.5" height="4.5" fill="#f08a9a"/><path d="M1.5 6.5 H19.5 M1.5 11 H19.5 M1.5 15.5 H19.5 M7.5 1.5 V20.5 M13.5 1.5 V20.5" stroke="#777" stroke-width="0.8"/><rect x="11" y="12" width="12" height="11" fill="#fff" stroke="#444" stroke-width="1.2"/><path d="M14 16 H20 M14 19 H20 M18.5 14 L15.5 21" stroke="#444" stroke-width="1"/></svg><svg style="left:915.40px;top:56.70px;" width="5.2" height="3.2" viewBox="0 0 5.2 3.2"><path d="M0 0 H5.2 L2.6 3.2Z" fill="#1f1f1f"/></svg><div class="a" style="left:927.20px;top:45.30px;width:22.00px;height:24.00px;background:#dad8d4;border-radius:3px;"></div><svg style="left:931.50px;top:49.50px;" width="15" height="15" viewBox="0 0 24 24"><path d="M14 3 H22 M15 3 V22 M19 3 V22" stroke="#555" stroke-width="1.3" fill="none"/><path d="M15 3 C9 3 8 12 15 12" fill="none" stroke="#555" stroke-width="1.3"/><path d="M2 19 H11 M8 16 L11 19 L8 22" stroke="#3a8fd8" stroke-width="1.5" fill="none"/></svg><svg style="left:953.50px;top:49.50px;" width="15" height="15" viewBox="0 0 24 24"><path d="M4 3 H14 M7 3 V22 M11 3 V22" stroke="#777" stroke-width="1.3" fill="none"/><path d="M7 3 C1 3 1 12 7 12" fill="none" stroke="#777" stroke-width="1.3"/><path d="M22 19 H13 M16 16 L13 19 L16 22" stroke="#3a8fd8" stroke-width="1.5" fill="none"/></svg><div class="a" style="left:974.00px;top:47.00px;width:1.00px;height:20.00px;background:#dcdad7;"></div><div class="a" style="left:976.80px;top:45.30px;width:21.70px;height:24.00px;background:#dad8d4;border-radius:3px;"></div><svg style="left:980.50px;top:49.50px;" width="15" height="15" viewBox="0 0 24 24"><text x="6.5" y="14" font-size="16" text-anchor="middle" fill="#3a8fd8" font-family="Liberation Sans">A</text><path d="M14 5 H21 M14 9 H21 M14 13 H21 M19 3 L21 5 L19 7 M19 7 L21 9 L19 11 M19 11 L21 13 L19 15 M2 20 H22 M19.5 18 L22 20 L19.5 22" stroke="#444" stroke-width="1.1" fill="none"/></svg><svg style="left:1001.50px;top:49.50px;" width="15" height="15" viewBox="0 0 24 24"><text x="16" y="14" font-size="15" text-anchor="middle" fill="#3a8fd8" font-family="Liberation Sans">A</text><path d="M2 3 V22 M8 10 V22 M14 14 V22 M20 14 V22 M0 19.5 L2 22 L4 19.5 M6 19.5 L8 22 L10 19.5 M12 19.5 L14 22 L16 19.5 M18 19.5 L20 22 L22 19.5 M10 3 V8" stroke="#444" stroke-width="1.1" fill="none"/></svg><div class="a" style="left:3.00px;top:72.80px;width:105.00px;height:20.50px;background:#ffffff;border:1px solid #d3d1ce;border-radius:3px;"></div><div class="a" style="left:86.3px;top:72.8px;width:21.7px;height:20.5px;background:#f2f1ef;border:1px solid #d3d1ce;border-radius:0 3px 3px 0;"></div><svg style="left:94.80px;top:82.50px;" width="7.4" height="3.8" viewBox="0 0 7.4 3.8"><path d="M0 0 H7.4 L3.7 3.8Z" fill="#2e3436"/></svg><div class="a" style="left:113.50px;top:75.00px;width:1.00px;height:18.00px;background:#dcdad7;"></div><svg style="left:149.40px;top:83.60px;" width="5.2" height="3.2" viewBox="0 0 5.2 3.2"><path d="M0 0 H5.2 L2.6 3.2Z" fill="#1f1f1f"/></svg><div class="a" style="left:173.3px;top:75.8px;width:970.4px;height:14.5px;background:#fff;border:1px solid #e2e0dd;"></div><svg style="left:1148.50px;top:82.70px;" width="7.4" height="3.8" viewBox="0 0 7.4 3.8"><path d="M0 0 H7.4 L3.7 3.8Z" fill="#2e3436"/></svg><div class="a" style="left:1161.50px;top:70.00px;width:1.00px;height:605.00px;background:#dcdad7;"></div><svg style="left:1176.70px;top:80.00px;" width="9.4" height="10" viewBox="0 0 9.4 10"><path d="M0 1.25 H9.4 M0 4.8 H9.4 M0 8.3 H9.4" stroke="#2e3436" stroke-width="1.3"/></svg><svg style="left:1174.00px;top:108.00px;" width="15" height="15" viewBox="0 0 24 24"><rect x="2" y="2" width="20" height="20" fill="#fff" stroke="#444" stroke-width="1.4"/><rect x="2" y="2" width="20" height="3.5" fill="#444"/><path d="M5 11 H19 M5 16 H19" stroke="#3a8fd8" stroke-width="1.4"/><path d="M9 9 V13 M15 14 V18" stroke="#3a8fd8" stroke-width="1.4"/></svg><svg style="left:1174.00px;top:137.00px;" width="15" height="15" viewBox="0 0 24 24"><path d="M1.5 18 L8 2 H9.5 L16 18 M4.5 11.5 H13" fill="none" stroke="#333" stroke-width="1.6"/><path d="M10 22 C10 18 13 16 15 17 L22 9" fill="none" stroke="#3a8fd8" stroke-width="2"/></svg><svg style="left:1174.00px;top:166.00px;" width="15" height="15" viewBox="0 0 24 24"><path d="M1.5 3 H8 L10 5 H20 V20 H1.5Z" fill="#fbe3a8" stroke="#f0a34a" stroke-width="1.3"/><rect x="8.5" y="9.5" width="14" height="12" fill="#fff" stroke="#2a6db5" stroke-width="1.3"/><path d="M9 21 L13 16 L16 19 L19 15 L22 19 V21Z" fill="#3a8fd8"/><circle cx="12.5" cy="13" r="1.3" fill="#3a8fd8"/></svg><svg style="left:1174.00px;top:195.00px;" width="15" height="15" viewBox="0 0 24 24"><circle cx="12" cy="12" r="10" fill="#fff" stroke="#444" stroke-width="1.4"/><path d="M16.5 7.5 L13.5 13.5 L7.5 16.5 L10.5 10.5Z" fill="#3a8fd8"/></svg><div class="a" style="left:1152.00px;top:100.10px;width:9.50px;height:531.90px;background:#cdcdcd;"></div><div class="a" style="left:1153.8px;top:104.5px;width:5px;height:181px;background:#7e7e7e;border-radius:2.5px;"></div><div class="a" style="left:1152.00px;top:100.10px;width:9.50px;height:1.40px;background:#7e7e7e;"></div><div class="a" style="left:1161.20px;top:338.80px;width:3.80px;height:49.70px;background:#9a9a9a;"></div><svg style="left:1161.50px;top:360.00px;" width="3" height="4" viewBox="0 0 3 4"><path d="M0 0 L3 2 L0 4Z" fill="#fff"/></svg><div class="a" style="left:0.00px;top:632.00px;width:1152.00px;height:9.00px;background:#cdcdcd;"></div><div class="a" style="left:2px;top:634.2px;width:543.5px;height:5.6px;background:#7e7e7e;border-radius:2.8px;"></div><div class="a" style="left:1149.50px;top:633.00px;width:1.00px;height:7.00px;background:#555;"></div><div class="a" style="left:1152.00px;top:632.00px;width:9.50px;height:9.00px;background:#f6f5f4;"></div><div class="a" style="left:0.00px;top:641.00px;width:1161.50px;height:17.00px;background:#f6f5f4;"></div><svg style="left:6.00px;top:645.00px;" width="60" height="11" viewBox="0 0 60 11"><path d="M1 0.5 V10.5 M3 0.5 V10.5 M9 0.5 L4 5.5 L9 10.5 M11 5.5 H13" stroke="#d4d4d4" stroke-width="1" fill="none"/><path d="M20 1 L15 5.5 L20 10 M26 1 L21 5.5 L26 10 M34 1 L39 5.5 L34 10 M40 1 L45 5.5 L40 10" stroke="#d4d4d4" stroke-width="1" fill="none"/><path d="M52 0.5 L57 5.5 L52 10.5 M58.5 0.5 V10.5" stroke="#d4d4d4" stroke-width="1" fill="none"/></svg><div class="a" style="left:74.50px;top:642.50px;width:9.50px;height:14.50px;background:#ffffff;"></div><svg style="left:80.50px;top:645.50px;" width="8" height="8" viewBox="0 0 8 8"><circle cx="4" cy="4" r="2.7" fill="#dbeaf8" stroke="#3a8fd8" stroke-width="1.3"/><path d="M4 2.6 V5.4 M2.6 4 H5.4" stroke="#3a8fd8" stroke-width="0.7"/></svg><div class="a" style="left:92.00px;top:641.50px;width:95.30px;height:14.50px;background:#ffffff;"></div><div class="a" style="left:92.00px;top:656.00px;width:95.30px;height:1.40px;background:#707070;"></div><div class="a" style="left:242.00px;top:646.00px;width:1.00px;height:9.00px;background:#d0cfcd;"></div><div class="a" style="left:320.00px;top:646.00px;width:1.00px;height:9.00px;background:#d0cfcd;"></div><div class="a" style="left:0.00px;top:658.00px;width:1200.00px;height:17.00px;background:#f6f5f4;"></div><div class="a" style="left:0.00px;top:657.80px;width:1200.00px;height:0.80px;background:#dcdad7;"></div><svg style="left:6.00px;top:661.00px;" width="11" height="11" viewBox="0 0 11 11"><path d="M0.5 0.5 H9 L10.5 2 V10.5 H0.5Z" fill="none" stroke="#aaa" stroke-width="1"/><rect x="2.5" y="1" width="5" height="3" fill="none" stroke="#aaa" stroke-width="0.8"/><rect x="2.5" y="6.5" width="6" height="4" fill="none" stroke="#aaa" stroke-width="0.8"/></svg><div class="a" style="left:173.50px;top:659.00px;width:1.00px;height:16.00px;background:#e1dfdc;"></div><div class="a" style="left:385.50px;top:659.00px;width:1.00px;height:16.00px;background:#e1dfdc;"></div><div class="a" style="left:612.80px;top:659.00px;width:1.00px;height:16.00px;background:#e1dfdc;"></div><div class="a" style="left:822.20px;top:659.00px;width:1.00px;height:16.00px;background:#e1dfdc;"></div><div class="a" style="left:852.80px;top:659.00px;width:1.00px;height:16.00px;background:#e1dfdc;"></div><div class="a" style="left:872.80px;top:659.00px;width:1.00px;height:16.00px;background:#e1dfdc;"></div><div class="a" style="left:893.50px;top:659.00px;width:1.00px;height:16.00px;background:#e1dfdc;"></div><div class="a" style="left:1070.20px;top:659.00px;width:1.00px;height:16.00px;background:#e1dfdc;"></div><div class="a" style="left:1167.80px;top:659.00px;width:1.00px;height:16.00px;background:#e1dfdc;"></div><svg style="left:829.00px;top:662.50px;" width="12" height="9" viewBox="0 0 12 9"><rect x="0.5" y="1.5" width="11" height="6.5" fill="#fff" stroke="#3a8fd8" stroke-width="1"/></svg><svg style="left:843.00px;top:661.00px;" width="5" height="11" viewBox="0 0 5 11"><path d="M2.5 0.5 V10.5 M0.5 0.5 H4.5 M0.5 10.5 H4.5" stroke="#444" stroke-width="1"/></svg><div class="a" style="left:1078.00px;top:666.20px;width:6.00px;height:1.10px;background:#333;"></div><div class="a" style="left:1088.00px;top:666.30px;width:63.70px;height:0.80px;background:#aaa;"></div><div class="a" style="left:1117.3px;top:662.5px;width:3px;height:8px;background:#f6f5f4;border:1px solid #555;border-radius:1px;"></div><div class="a" style="left:1156.00px;top:666.20px;width:6.70px;height:1.10px;background:#333;"></div><div class="a" style="left:1158.80px;top:663.40px;width:1.10px;height:6.70px;background:#333;"></div><div class="t" style="left:105.38px;top:102.58px;font-size:9.0px;font-weight:bold;color:#ffffff;transform-origin:50% 0;transform:translateX(-50%) scaleX(1.0000);">A</div><div class="t" style="left:231.54px;top:102.58px;font-size:9.0px;font-weight:bold;color:#ffffff;transform-origin:50% 0;transform:translateX(-50%) scaleX(1.0000);">B</div><div class="t" style="left:317.12px;top:102.58px;font-size:9.0px;font-weight:bold;color:#ffffff;transform-origin:50% 0;transform:translateX(-50%) scaleX(1.0000);">C</div><div class="t" style="left:402.71px;top:102.58px;font-size:9.0px;font-weight:bold;color:#ffffff;transform-origin:50% 0;transform:translateX(-50%) scaleX(1.0000);">D</div><div class="t" style="left:466.15px;top:102.58px;font-size:9.0px;font-weight:bold;color:#ffffff;transform-origin:50% 0;transform:translateX(-50%) scaleX(1.0000);">E</div><div class="t" style="left:507.45px;top:102.58px;font-size:9.0px;font-weight:bold;color:#ffffff;transform-origin:50% 0;transform:translateX(-50%) scaleX(1.0000);">F</div><div class="t" style="left:548.75px;top:102.58px;font-size:9.0px;font-weight:bold;color:#ffffff;transform-origin:50% 0;transform:translateX(-50%) scaleX(1.0000);">G</div><div class="t" style="left:590.05px;top:102.58px;font-size:9.0px;font-weight:bold;color:#ffffff;transform-origin:50% 0;transform:translateX(-50%) scaleX(1.0000);">H</div><div class="t" style="left:631.35px;top:102.58px;font-size:9.0px;font-weight:normal;color:#5e5c5a;transform-origin:50% 0;transform:translateX(-50%) scaleX(1.0000);">I</div><div class="t" style="left:672.65px;top:102.58px;font-size:9.0px;font-weight:normal;color:#5e5c5a;transform-origin:50% 0;transform:translateX(-50%) scaleX(1.0000);">J</div><div class="t" style="left:713.95px;top:102.58px;font-size:9.0px;font-weight:normal;color:#5e5c5a;transform-origin:50% 0;transform:translateX(-50%) scaleX(1.0000);">K</div><div class="t" style="left:755.25px;top:102.58px;font-size:9.0px;font-weight:normal;color:#5e5c5a;transform-origin:50% 0;transform:translateX(-50%) scaleX(1.0000);">L</div><div class="t" style="left:796.55px;top:102.58px;font-size:9.0px;font-weight:normal;color:#5e5c5a;transform-origin:50% 0;transform:translateX(-50%) scaleX(1.0000);">M</div><div class="t" style="left:837.85px;top:102.58px;font-size:9.0px;font-weight:normal;color:#5e5c5a;transform-origin:50% 0;transform:translateX(-50%) scaleX(1.0000);">N</div><div class="t" style="left:879.15px;top:102.58px;font-size:9.0px;font-weight:normal;color:#5e5c5a;transform-origin:50% 0;transform:translateX(-50%) scaleX(1.0000);">O</div><div class="t" style="left:920.45px;top:102.58px;font-size:9.0px;font-weight:normal;color:#5e5c5a;transform-origin:50% 0;transform:translateX(-50%) scaleX(1.0000);">P</div><div class="t" style="left:961.75px;top:102.58px;font-size:9.0px;font-weight:normal;color:#5e5c5a;transform-origin:50% 0;transform:translateX(-50%) scaleX(1.0000);">Q</div><div class="t" style="left:1003.05px;top:102.58px;font-size:9.0px;font-weight:normal;color:#5e5c5a;transform-origin:50% 0;transform:translateX(-50%) scaleX(1.0000);">R</div><div class="t" style="left:1044.35px;top:102.58px;font-size:9.0px;font-weight:normal;color:#5e5c5a;transform-origin:50% 0;transform:translateX(-50%) scaleX(1.0000);">S</div><div class="t" style="left:1085.65px;top:102.58px;font-size:9.0px;font-weight:normal;color:#5e5c5a;transform-origin:50% 0;transform:translateX(-50%) scaleX(1.0000);">T</div><div class="t" style="left:1126.95px;top:102.58px;font-size:9.0px;font-weight:normal;color:#5e5c5a;transform-origin:50% 0;transform:translateX(-50%) scaleX(1.0000);">U</div><div class="t" style="left:11.00px;top:119.17px;font-size:9.4px;font-weight:normal;color:#ffffff;transform-origin:50% 0;transform:translateX(-50%) scaleX(1.0000);">1</div><div class="t" style="left:11.00px;top:136.22px;font-size:9.4px;font-weight:normal;color:#555555;transform-origin:50% 0;transform:translateX(-50%) scaleX(1.0000);">2</div><div class="t" style="left:11.00px;top:150.07px;font-size:9.4px;font-weight:normal;color:#555555;transform-origin:50% 0;transform:translateX(-50%) scaleX(1.0000);">3</div><div class="t" style="left:11.00px;top:165.79px;font-size:9.4px;font-weight:normal;color:#555555;transform-origin:50% 0;transform:translateX(-50%) scaleX(1.0000);">4</div><div class="t" style="left:11.00px;top:181.52px;font-size:9.4px;font-weight:normal;color:#555555;transform-origin:50% 0;transform:translateX(-50%) scaleX(1.0000);">5</div><div class="t" style="left:11.00px;top:195.37px;font-size:9.4px;font-weight:normal;color:#555555;transform-origin:50% 0;transform:translateX(-50%) scaleX(1.0000);">6</div><div class="t" style="left:11.00px;top:209.22px;font-size:9.4px;font-weight:normal;color:#555555;transform-origin:50% 0;transform:translateX(-50%) scaleX(1.0000);">7</div><div class="t" style="left:11.00px;top:223.07px;font-size:9.4px;font-weight:normal;color:#555555;transform-origin:50% 0;transform:translateX(-50%) scaleX(1.0000);">8</div><div class="t" style="left:11.00px;top:238.79px;font-size:9.4px;font-weight:normal;color:#555555;transform-origin:50% 0;transform:translateX(-50%) scaleX(1.0000);">9</div><div class="t" style="left:11.00px;top:254.52px;font-size:9.4px;font-weight:normal;color:#555555;transform-origin:50% 0;transform:translateX(-50%) scaleX(1.0000);">10</div><div class="t" style="left:11.00px;top:268.37px;font-size:9.4px;font-weight:normal;color:#555555;transform-origin:50% 0;transform:translateX(-50%) scaleX(1.0000);">11</div><div class="t" style="left:11.00px;top:282.22px;font-size:9.4px;font-weight:normal;color:#555555;transform-origin:50% 0;transform:translateX(-50%) scaleX(1.0000);">12</div><div class="t" style="left:11.00px;top:296.07px;font-size:9.4px;font-weight:normal;color:#555555;transform-origin:50% 0;transform:translateX(-50%) scaleX(1.0000);">13</div><div class="t" style="left:11.00px;top:309.92px;font-size:9.4px;font-weight:normal;color:#555555;transform-origin:50% 0;transform:translateX(-50%) scaleX(1.0000);">14</div><div class="t" style="left:11.00px;top:323.77px;font-size:9.4px;font-weight:normal;color:#555555;transform-origin:50% 0;transform:translateX(-50%) scaleX(1.0000);">15</div><div class="t" style="left:11.00px;top:339.49px;font-size:9.4px;font-weight:normal;color:#555555;transform-origin:50% 0;transform:translateX(-50%) scaleX(1.0000);">16</div><div class="t" style="left:11.00px;top:355.22px;font-size:9.4px;font-weight:normal;color:#555555;transform-origin:50% 0;transform:translateX(-50%) scaleX(1.0000);">17</div><div class="t" style="left:11.00px;top:369.07px;font-size:9.4px;font-weight:normal;color:#555555;transform-origin:50% 0;transform:translateX(-50%) scaleX(1.0000);">18</div><div class="t" style="left:11.00px;top:382.92px;font-size:9.4px;font-weight:normal;color:#555555;transform-origin:50% 0;transform:translateX(-50%) scaleX(1.0000);">19</div><div class="t" style="left:11.00px;top:396.77px;font-size:9.4px;font-weight:normal;color:#555555;transform-origin:50% 0;transform:translateX(-50%) scaleX(1.0000);">20</div><div class="t" style="left:11.00px;top:410.62px;font-size:9.4px;font-weight:normal;color:#555555;transform-origin:50% 0;transform:translateX(-50%) scaleX(1.0000);">21</div><div class="t" style="left:11.00px;top:424.47px;font-size:9.4px;font-weight:normal;color:#555555;transform-origin:50% 0;transform:translateX(-50%) scaleX(1.0000);">22</div><div class="t" style="left:11.00px;top:438.32px;font-size:9.4px;font-weight:normal;color:#555555;transform-origin:50% 0;transform:translateX(-50%) scaleX(1.0000);">23</div><div class="t" style="left:11.00px;top:452.17px;font-size:9.4px;font-weight:normal;color:#555555;transform-origin:50% 0;transform:translateX(-50%) scaleX(1.0000);">24</div><div class="t" style="left:11.00px;top:466.02px;font-size:9.4px;font-weight:normal;color:#555555;transform-origin:50% 0;transform:translateX(-50%) scaleX(1.0000);">25</div><div class="t" style="left:11.00px;top:479.87px;font-size:9.4px;font-weight:normal;color:#555555;transform-origin:50% 0;transform:translateX(-50%) scaleX(1.0000);">26</div><div class="t" style="left:11.00px;top:495.59px;font-size:9.4px;font-weight:normal;color:#555555;transform-origin:50% 0;transform:translateX(-50%) scaleX(1.0000);">27</div><div class="t" style="left:11.00px;top:511.32px;font-size:9.4px;font-weight:normal;color:#555555;transform-origin:50% 0;transform:translateX(-50%) scaleX(1.0000);">28</div><div class="t" style="left:11.00px;top:525.17px;font-size:9.4px;font-weight:normal;color:#555555;transform-origin:50% 0;transform:translateX(-50%) scaleX(1.0000);">29</div><div class="t" style="left:11.00px;top:539.02px;font-size:9.4px;font-weight:normal;color:#555555;transform-origin:50% 0;transform:translateX(-50%) scaleX(1.0000);">30</div><div class="t" style="left:11.00px;top:552.87px;font-size:9.4px;font-weight:normal;color:#555555;transform-origin:50% 0;transform:translateX(-50%) scaleX(1.0000);">31</div><div class="t" style="left:11.00px;top:566.72px;font-size:9.4px;font-weight:normal;color:#555555;transform-origin:50% 0;transform:translateX(-50%) scaleX(1.0000);">32</div><div class="t" style="left:11.00px;top:580.57px;font-size:9.4px;font-weight:normal;color:#555555;transform-origin:50% 0;transform:translateX(-50%) scaleX(1.0000);">33</div><div class="t" style="left:11.00px;top:594.42px;font-size:9.4px;font-weight:normal;color:#555555;transform-origin:50% 0;transform:translateX(-50%) scaleX(1.0000);">34</div><div class="t" style="left:11.00px;top:608.27px;font-size:9.4px;font-weight:normal;color:#555555;transform-origin:50% 0;transform:translateX(-50%) scaleX(1.0000);">35</div><div class="t" style="left:11.00px;top:622.12px;font-size:9.4px;font-weight:normal;color:#555555;transform-origin:50% 0;transform:translateX(-50%) scaleX(1.0000);">36</div><div class="t" style="left:316.35px;top:115.73px;font-size:14.5px;font-weight:bold;color:#2a3f88;transform-origin:50% 0;transform:translateX(-50%) scaleX(0.9017);"><span class="w">GEHALTSABRECHNUNG</span></div><div class="t" style="left:316.00px;top:135.38px;font-size:10.3px;font-weight:normal;color:#6a6a6a;transform-origin:50% 0;transform:translateX(-50%) scaleX(0.9335);"><span class="w">Abrechnungszeitraum</span>: February 2026</div><div class="t" style="left:22.40px;top:165.27px;font-size:12.5px;font-weight:bold;color:#2a3f88;transform-origin:0 0;transform:scaleX(0.9098);"><span class="w">ARBEITGEBERDATEN</span></div><div class="t" style="left:22.40px;top:238.27px;font-size:12.5px;font-weight:bold;color:#2a3f88;transform-origin:0 0;transform:scaleX(0.9483);"><span class="w">ARBEITNEHMERDATEN</span></div><div class="t" style="left:22.40px;top:338.97px;font-size:12.5px;font-weight:bold;color:#2a3f88;transform-origin:0 0;transform:scaleX(0.9038);"><span class="w">BEZÜGE</span></div><div class="t" style="left:22.40px;top:495.07px;font-size:12.5px;font-weight:bold;color:#2a3f88;transform-origin:0 0;transform:scaleX(0.9208);"><span class="w">ABZÜGE</span></div><div class="t" style="left:22.40px;top:182.74px;font-size:8.7px;font-weight:bold;color:#1e1e1e;transform-origin:0 0;transform:scaleX(1.0000);"><span class="w">Firmenname</span>:</div><div class="t" style="left:189.65px;top:182.74px;font-size:8.7px;font-weight:normal;color:#444444;transform-origin:0 0;transform:scaleX(1.0600);">[<span class="w">Firmenname eintragen</span>]</div><div class="t" style="left:22.40px;top:196.59px;font-size:8.7px;font-weight:bold;color:#1e1e1e;transform-origin:0 0;transform:scaleX(1.0000);"><span class="w">Adresse</span>:</div><div class="t" style="left:189.65px;top:196.59px;font-size:8.7px;font-weight:normal;color:#444444;transform-origin:0 0;transform:scaleX(1.0600);">[<span class="w">Straße, PLZ Ort</span>]</div><div class="t" style="left:22.40px;top:210.44px;font-size:8.7px;font-weight:bold;color:#1e1e1e;transform-origin:0 0;transform:scaleX(1.0000);"><span class="w">Steuernummer</span>:</div><div class="t" style="left:189.65px;top:210.44px;font-size:8.7px;font-weight:normal;color:#444444;transform-origin:0 0;transform:scaleX(1.0600);">[<span class="w">Steuernummer</span>]</div><div class="t" style="left:22.40px;top:255.74px;font-size:8.7px;font-weight:bold;color:#1e1e1e;transform-origin:0 0;transform:scaleX(1.0000);">Name:</div><div class="a" style="left:189.25px;top:252.05px;width:81.05px;height:13.85px;overflow:hidden;"><div class="t" style="left:0.40px;top:3.69px;font-size:8.7px;font-weight:normal;color:#444444;transform-origin:0 0;transform:scaleX(1.0600); ">[<span class="w">Vorname Nachname</span>]</div></div><svg style="left:271.20px;top:257.37px;" width="2.6" height="3.2" viewBox="0 0 2.6 3.2"><path d="M0 0 L2.6 1.6 L0 3.2Z" fill="#4a2a2a"/></svg><div class="t" style="left:274.73px;top:255.74px;font-size:8.7px;font-weight:bold;color:#1e1e1e;transform-origin:0 0;transform:scaleX(1.0000);"><span class="w">Personalnummer</span>:</div><div class="t" style="left:360.82px;top:255.74px;font-size:8.7px;font-weight:normal;color:#444444;transform-origin:0 0;transform:scaleX(1.0600);">[<span class="w">Pers.Nr.</span>]</div><div class="t" style="left:22.40px;top:269.59px;font-size:8.7px;font-weight:bold;color:#1e1e1e;transform-origin:0 0;transform:scaleX(1.0000);"><span class="w">Geburtsdatum</span>:</div><div class="t" style="left:189.65px;top:269.59px;font-size:8.7px;font-weight:normal;color:#444444;transform-origin:0 0;transform:scaleX(1.0600);">[<span class="w">TT.MM.JJJJ</span>]</div><div class="t" style="left:274.73px;top:269.59px;font-size:8.7px;font-weight:bold;color:#1e1e1e;transform-origin:0 0;transform:scaleX(1.0000);"><span class="w">Eintrittsdatum</span>:</div><div class="t" style="left:360.82px;top:269.59px;font-size:8.7px;font-weight:normal;color:#444444;transform-origin:0 0;transform:scaleX(1.0600);">[<span class="w">TT.MM.JJJJ</span>]</div><div class="t" style="left:22.40px;top:283.44px;font-size:8.7px;font-weight:bold;color:#1e1e1e;transform-origin:0 0;transform:scaleX(1.0000);"><span class="w">Sozialvers.Nr.</span>:</div><div class="a" style="left:189.25px;top:279.75px;width:81.05px;height:13.85px;overflow:hidden;"><div class="t" style="left:0.40px;top:3.69px;font-size:8.7px;font-weight:normal;color:#444444;transform-origin:0 0;transform:scaleX(1.0600); ">[<span class="w">Sozialversicherungsnummer</span>]</div></div><svg style="left:271.20px;top:285.07px;" width="2.6" height="3.2" viewBox="0 0 2.6 3.2"><path d="M0 0 L2.6 1.6 L0 3.2Z" fill="#4a2a2a"/></svg><div class="t" style="left:274.73px;top:283.44px;font-size:8.7px;font-weight:bold;color:#1e1e1e;transform-origin:0 0;transform:scaleX(1.0000);"><span class="w">Steuer-ID</span>:</div><div class="t" style="left:360.82px;top:283.44px;font-size:8.7px;font-weight:normal;color:#444444;transform-origin:0 0;transform:scaleX(1.0600);">[<span class="w">Steuer-Identifikationsnummer</span>]</div><div class="t" style="left:22.40px;top:297.29px;font-size:8.7px;font-weight:bold;color:#1e1e1e;transform-origin:0 0;transform:scaleX(1.0000);"><span class="w">Steuerklasse</span>:</div><div class="t" style="left:189.65px;top:297.29px;font-size:8.7px;font-weight:normal;color:#444444;transform-origin:0 0;transform:scaleX(1.0600);">[I-VI]</div><div class="t" style="left:274.73px;top:297.29px;font-size:8.7px;font-weight:bold;color:#1e1e1e;transform-origin:0 0;transform:scaleX(1.0000);"><span class="w">Kinderfreibeträge</span>:</div><div class="t" style="left:360.82px;top:297.29px;font-size:8.7px;font-weight:normal;color:#444444;transform-origin:0 0;transform:scaleX(1.0600);">[<span class="w">Anzahl</span>]</div><div class="t" style="left:22.40px;top:311.14px;font-size:8.7px;font-weight:bold;color:#1e1e1e;transform-origin:0 0;transform:scaleX(1.0000);"><span class="w">Krankenversicherung</span>:</div><div class="t" style="left:189.65px;top:311.14px;font-size:8.7px;font-weight:normal;color:#444444;transform-origin:0 0;transform:scaleX(1.0600);">[Name <span class="w">der KV</span>]</div><div class="t" style="left:274.73px;top:311.14px;font-size:8.7px;font-weight:bold;color:#1e1e1e;transform-origin:0 0;transform:scaleX(1.0000);"><span class="w">KV-Beitragssatz</span>:</div><div class="t" style="left:360.82px;top:311.14px;font-size:8.7px;font-weight:normal;color:#444444;transform-origin:0 0;transform:scaleX(1.0600);">[<span class="w">z.B.</span> 14,6%]</div><div class="t" style="left:105.38px;top:354.64px;font-size:8.7px;font-weight:bold;color:#ffffff;transform-origin:50% 0;transform:translateX(-50%) scaleX(1.0800);"><span class="w">Bezeichnung</span></div><div class="t" style="left:231.54px;top:354.64px;font-size:8.7px;font-weight:bold;color:#ffffff;transform-origin:50% 0;transform:translateX(-50%) scaleX(1.0800);"><span class="w">Stunden/Einheit</span></div><div class="t" style="left:317.12px;top:354.64px;font-size:8.7px;font-weight:bold;color:#ffffff;transform-origin:50% 0;transform:translateX(-50%) scaleX(1.0800);"><span class="w">Betrag</span> (€)</div><div class="t" style="left:23.00px;top:368.59px;font-size:8.7px;font-weight:normal;color:#1c1c1c;transform-origin:0 0;transform:scaleX(1.0350);"><span class="w">Grundgehalt</span></div><div class="t" style="left:358.72px;top:368.59px;font-size:8.7px;font-weight:normal;color:#1c1c1c;transform-origin:100% 0;transform:translateX(-100%) scaleX(1.0000);">Err:522</div><div class="t" style="left:23.00px;top:382.44px;font-size:8.7px;font-weight:normal;color:#1c1c1c;transform-origin:0 0;transform:scaleX(1.0350);"><span class="w">Eingabe Grundgehalt</span>:</div><div class="t" style="left:358.72px;top:382.44px;font-size:8.7px;font-weight:normal;color:#1c1c1c;transform-origin:100% 0;transform:translateX(-100%) scaleX(1.0000);">3,500.00 €</div><div class="t" style="left:23.00px;top:396.29px;font-size:8.7px;font-weight:normal;color:#1c1c1c;transform-origin:0 0;transform:scaleX(1.0350);"><span class="w">Überstunden</span></div><div class="t" style="left:231.54px;top:396.29px;font-size:8.7px;font-weight:normal;color:#1c1c1c;transform-origin:50% 0;transform:translateX(-50%) scaleX(1.0000);">0.00</div><div class="t" style="left:358.72px;top:396.29px;font-size:8.7px;font-weight:normal;color:#1c1c1c;transform-origin:100% 0;transform:translateX(-100%) scaleX(1.0000);">0.00 €</div><div class="t" style="left:23.00px;top:410.14px;font-size:8.7px;font-weight:normal;color:#1c1c1c;transform-origin:0 0;transform:scaleX(1.0350);"><span class="w">Eingabe Überstunden</span>:</div><div class="t" style="left:358.72px;top:410.14px;font-size:8.7px;font-weight:normal;color:#1c1c1c;transform-origin:100% 0;transform:translateX(-100%) scaleX(1.0000);">10.00 €</div><div class="t" style="left:23.00px;top:423.99px;font-size:8.7px;font-weight:normal;color:#1c1c1c;transform-origin:0 0;transform:scaleX(1.0350);"><span class="w">Urlaubsgeld</span></div><div class="t" style="left:23.00px;top:437.84px;font-size:8.7px;font-weight:normal;color:#1c1c1c;transform-origin:0 0;transform:scaleX(1.0350);"><span class="w">Weihnachtsgeld</span></div><div class="t" style="left:23.00px;top:451.69px;font-size:8.7px;font-weight:normal;color:#1c1c1c;transform-origin:0 0;transform:scaleX(1.0350);"><span class="w">Sonstige Bezüge</span></div><div class="t" style="left:22.60px;top:465.62px;font-size:8.6px;font-weight:bold;color:#ffffff;transform-origin:0 0;transform:scaleX(0.9505);"><span class="w">BRUTTOBEZÜGE GESAMT</span></div><div class="t" style="left:358.52px;top:465.01px;font-size:9.2px;font-weight:bold;color:#ffffff;transform-origin:100% 0;transform:translateX(-100%) scaleX(0.9844);">Err:522</div><div class="t" style="left:105.38px;top:510.74px;font-size:8.7px;font-weight:bold;color:#ffffff;transform-origin:50% 0;transform:translateX(-50%) scaleX(1.0800);"><span class="w">Bezeichnung</span></div><div class="t" style="left:231.54px;top:510.74px;font-size:8.7px;font-weight:bold;color:#ffffff;transform-origin:50% 0;transform:translateX(-50%) scaleX(1.0800);">Satz (%)</div><div class="t" style="left:317.12px;top:510.74px;font-size:8.7px;font-weight:bold;color:#ffffff;transform-origin:50% 0;transform:translateX(-50%) scaleX(1.0800);"><span class="w">Betrag</span> (€)</div><div class="t" style="left:23.00px;top:524.69px;font-size:8.7px;font-weight:normal;color:#1c1c1c;transform-origin:0 0;transform:scaleX(1.0350);"><span class="w">Lohnsteuer</span></div><div class="t" style="left:231.54px;top:524.69px;font-size:8.7px;font-weight:normal;color:#1c1c1c;transform-origin:50% 0;transform:translateX(-50%) scaleX(1.0000);">1500.00%</div><div class="t" style="left:358.72px;top:524.69px;font-size:8.7px;font-weight:normal;color:#1c1c1c;transform-origin:100% 0;transform:translateX(-100%) scaleX(1.0000);">Err:522</div><div class="t" style="left:23.00px;top:538.54px;font-size:8.7px;font-weight:normal;color:#1c1c1c;transform-origin:0 0;transform:scaleX(1.0350);"><span class="w">Solidaritätszuschlag</span></div><div class="t" style="left:231.54px;top:538.54px;font-size:8.7px;font-weight:normal;color:#1c1c1c;transform-origin:50% 0;transform:translateX(-50%) scaleX(1.0000);">550.00%</div><div class="t" style="left:358.72px;top:538.54px;font-size:8.7px;font-weight:normal;color:#1c1c1c;transform-origin:100% 0;transform:translateX(-100%) scaleX(1.0000);">#VALUE!</div><div class="t" style="left:23.00px;top:552.39px;font-size:8.7px;font-weight:normal;color:#1c1c1c;transform-origin:0 0;transform:scaleX(1.0350);"><span class="w">Kirchensteuer</span></div><div class="t" style="left:231.54px;top:552.39px;font-size:8.7px;font-weight:normal;color:#1c1c1c;transform-origin:50% 0;transform:translateX(-50%) scaleX(1.0000);">900.00%</div><div class="t" style="left:358.72px;top:552.39px;font-size:8.7px;font-weight:normal;color:#1c1c1c;transform-origin:100% 0;transform:translateX(-100%) scaleX(1.0000);">0.00 €</div><div class="t" style="left:23.00px;top:566.24px;font-size:8.7px;font-weight:normal;color:#1c1c1c;transform-origin:0 0;transform:scaleX(1.0350);"><span class="w">Rentenversicherung</span> <span class="w">(AN-Anteil)</span></div><div class="t" style="left:231.54px;top:566.24px;font-size:8.7px;font-weight:normal;color:#1c1c1c;transform-origin:50% 0;transform:translateX(-50%) scaleX(1.0000);">930.00%</div><div class="t" style="left:358.72px;top:566.24px;font-size:8.7px;font-weight:normal;color:#1c1c1c;transform-origin:100% 0;transform:translateX(-100%) scaleX(1.0000);">Err:522</div><div class="t" style="left:23.00px;top:580.09px;font-size:8.7px;font-weight:normal;color:#1c1c1c;transform-origin:0 0;transform:scaleX(1.0350);"><span class="w">Arbeitslosenversicherung</span> <span class="w">(AN-Anteil)</span></div><div class="t" style="left:231.54px;top:580.09px;font-size:8.7px;font-weight:normal;color:#1c1c1c;transform-origin:50% 0;transform:translateX(-50%) scaleX(1.0000);">120.00%</div><div class="t" style="left:358.72px;top:580.09px;font-size:8.7px;font-weight:normal;color:#1c1c1c;transform-origin:100% 0;transform:translateX(-100%) scaleX(1.0000);">Err:522</div><div class="t" style="left:23.00px;top:593.94px;font-size:8.7px;font-weight:normal;color:#1c1c1c;transform-origin:0 0;transform:scaleX(1.0350);"><span class="w">Krankenversicherung</span> <span class="w">(AN-Anteil)</span></div><div class="t" style="left:231.54px;top:593.94px;font-size:8.7px;font-weight:normal;color:#1c1c1c;transform-origin:50% 0;transform:translateX(-50%) scaleX(1.0000);">730.00%</div><div class="t" style="left:358.72px;top:593.94px;font-size:8.7px;font-weight:normal;color:#1c1c1c;transform-origin:100% 0;transform:translateX(-100%) scaleX(1.0000);">Err:522</div><div class="t" style="left:23.00px;top:607.79px;font-size:8.7px;font-weight:normal;color:#1c1c1c;transform-origin:0 0;transform:scaleX(1.0350);"><span class="w">Pflegeversicherung</span> <span class="w">(AN-Anteil)</span></div><div class="t" style="left:231.54px;top:607.79px;font-size:8.7px;font-weight:normal;color:#1c1c1c;transform-origin:50% 0;transform:translateX(-50%) scaleX(1.0000);">152.50%</div><div class="t" style="left:358.72px;top:607.79px;font-size:8.7px;font-weight:normal;color:#1c1c1c;transform-origin:100% 0;transform:translateX(-100%) scaleX(1.0000);">Err:522</div><div class="t" style="left:23.00px;top:621.64px;font-size:8.7px;font-weight:normal;color:#1c1c1c;transform-origin:0 0;transform:scaleX(1.0350);"><span class="w">Zusatzbeitrag KV</span> <span class="w">(AN-Anteil)</span></div><div class="t" style="left:231.54px;top:621.64px;font-size:8.7px;font-weight:normal;color:#1c1c1c;transform-origin:50% 0;transform:translateX(-50%) scaleX(1.0000);">80.00%</div><div class="t" style="left:358.72px;top:621.64px;font-size:8.7px;font-weight:normal;color:#1c1c1c;transform-origin:100% 0;transform:translateX(-100%) scaleX(1.0000);">Err:522</div><div class="t" style="left:5.50px;top:4.14px;font-size:9.4px;font-weight:normal;color:#2e3436;transform-origin:0 0;transform:scaleX(0.9700);">File</div><div class="t" style="left:31.70px;top:4.14px;font-size:9.4px;font-weight:normal;color:#2e3436;transform-origin:0 0;transform:scaleX(0.9700);">Edit</div><div class="t" style="left:58.70px;top:4.14px;font-size:9.4px;font-weight:normal;color:#2e3436;transform-origin:0 0;transform:scaleX(0.9700);">View</div><div class="t" style="left:90.80px;top:4.14px;font-size:9.4px;font-weight:normal;color:#2e3436;transform-origin:0 0;transform:scaleX(0.9700);">Insert</div><div class="t" style="left:125.80px;top:4.14px;font-size:9.4px;font-weight:normal;color:#2e3436;transform-origin:0 0;transform:scaleX(0.9700);">Format</div><div class="t" style="left:167.20px;top:4.14px;font-size:9.4px;font-weight:normal;color:#2e3436;transform-origin:0 0;transform:scaleX(0.9700);">Styles</div><div class="t" style="left:204.20px;top:4.14px;font-size:9.4px;font-weight:normal;color:#2e3436;transform-origin:0 0;transform:scaleX(0.9700);">Sheet</div><div class="t" style="left:239.50px;top:4.14px;font-size:9.4px;font-weight:normal;color:#2e3436;transform-origin:0 0;transform:scaleX(0.9700);">Data</div><div class="t" style="left:270.80px;top:4.14px;font-size:9.4px;font-weight:normal;color:#2e3436;transform-origin:0 0;transform:scaleX(0.9700);">Tools</div><div class="t" style="left:303.30px;top:4.14px;font-size:9.4px;font-weight:normal;color:#2e3436;transform-origin:0 0;transform:scaleX(0.9700);">Window</div><div class="t" style="left:348.30px;top:4.14px;font-size:9.4px;font-weight:normal;color:#2e3436;transform-origin:0 0;transform:scaleX(0.9700);">Help</div><div class="t" style="left:9.50px;top:52.03px;font-size:9.3px;font-weight:normal;color:#2e3436;transform-origin:0 0;transform:scaleX(1.0000);font-style:italic;">Calibri</div><div class="t" style="left:152.00px;top:52.03px;font-size:9.3px;font-weight:normal;color:#2e3436;transform-origin:0 0;transform:scaleX(1.0000);">18 pt</div><div class="t" style="left:228.40px;top:51.37px;font-size:12.2px;font-weight:bold;color:#333;transform-origin:50% 0;transform:translateX(-50%) scaleX(1.0000);">B</div><div class="t" style="left:251.40px;top:51.37px;font-size:12.2px;font-weight:normal;color:#444;transform-origin:50% 0;transform:translateX(-50%) scaleX(1.0000);font-family:'Liberation Serif';font-style:italic;">I</div><div class="t" style="left:272.00px;top:51.69px;font-size:11px;font-weight:normal;color:#444;transform-origin:50% 0;transform:translateX(-50%) scaleX(1.0000);">U</div><div class="t" style="left:306.40px;top:51.04px;font-size:12px;font-weight:normal;color:#444;transform-origin:50% 0;transform:translateX(-50%) scaleX(1.0000);">A</div><div class="t" style="left:641.30px;top:50.08px;font-size:15.5px;font-weight:normal;color:#707070;transform-origin:50% 0;transform:translateX(-50%) scaleX(0.8500);">%</div><div class="t" style="left:663.50px;top:50.95px;font-size:14px;font-weight:normal;color:#707070;transform-origin:50% 0;transform:translateX(-50%) scaleX(0.8500);">0.0</div><div class="t" style="left:711.50px;top:50.75px;font-size:14px;font-weight:normal;color:#707070;transform-origin:50% 0;transform:translateX(-50%) scaleX(0.8000);">.00</div><div class="t" style="left:733.50px;top:50.75px;font-size:14px;font-weight:normal;color:#707070;transform-origin:50% 0;transform:translateX(-50%) scaleX(0.8000);">.00</div><div class="t" style="left:8.00px;top:80.23px;font-size:9.3px;font-weight:normal;color:#2e3436;transform-origin:0 0;transform:scaleX(1.0000);">A1:H1</div><div class="t" style="left:124.30px;top:77.65px;font-size:14px;font-weight:normal;color:#3a8fd8;transform-origin:50% 0;transform:translateX(-50%) scaleX(1.0000);font-family:'Liberation Serif';font-style:italic;">fx</div><div class="t" style="left:139.70px;top:78.92px;font-size:12.5px;font-weight:normal;color:#555;transform-origin:50% 0;transform:translateX(-50%) scaleX(0.8000);">∑</div><div class="t" style="left:164.70px;top:78.54px;font-size:12px;font-weight:bold;color:#444;transform-origin:50% 0;transform:translateX(-50%) scaleX(1.0000);">=</div><div class="t" style="left:178.00px;top:80.10px;font-size:9.1px;font-weight:normal;color:#333;transform-origin:0 0;transform:scaleX(0.8991);">GEHALTSABRECHNUNG</div><div class="t" style="left:1181.50px;top:224.38px;font-size:15.5px;font-weight:normal;color:#3a8fd8;transform-origin:50% 0;transform:translateX(-50%) scaleX(1.0000);font-family:'Liberation Serif';font-style:italic;">fx</div><div class="t" style="left:100.00px;top:644.61px;font-size:9.2px;font-weight:bold;color:#333;transform-origin:0 0;transform:scaleX(0.9140);">Gehaltsabrechnung</div><div class="t" style="left:197.00px;top:644.61px;font-size:9.2px;font-weight:normal;color:#444;transform-origin:0 0;transform:scaleX(0.9132);">Anleitung</div><div class="t" style="left:252.70px;top:644.61px;font-size:9.2px;font-weight:normal;color:#444;transform-origin:0 0;transform:scaleX(0.8815);">Jahresübersicht</div><div class="t" style="left:27.50px;top:662.41px;font-size:9.2px;font-weight:normal;color:#333;transform-origin:0 0;transform:scaleX(0.8700);">Sheet 1 of 3</div><div class="t" style="left:180.00px;top:662.41px;font-size:9.2px;font-weight:normal;color:#333;transform-origin:0 0;transform:scaleX(0.8909);">Selected: 1 row, 8 columns</div><div class="t" style="left:392.70px;top:662.41px;font-size:9.2px;font-weight:normal;color:#333;transform-origin:0 0;transform:scaleX(0.8921);">PageStyle_Gehaltsabrechnung</div><div class="t" style="left:670.70px;top:662.41px;font-size:9.2px;font-weight:normal;color:#333;transform-origin:0 0;transform:scaleX(0.8621);">English (USA)</div><div class="t" style="left:951.00px;top:662.41px;font-size:9.2px;font-weight:normal;color:#333;transform-origin:0 0;transform:scaleX(0.8863);">Average: ; Sum: 0</div><div class="t" style="left:1172.70px;top:662.41px;font-size:9.2px;font-weight:normal;color:#333;transform-origin:0 0;transform:scaleX(0.8583);">100%</div></body></html>
